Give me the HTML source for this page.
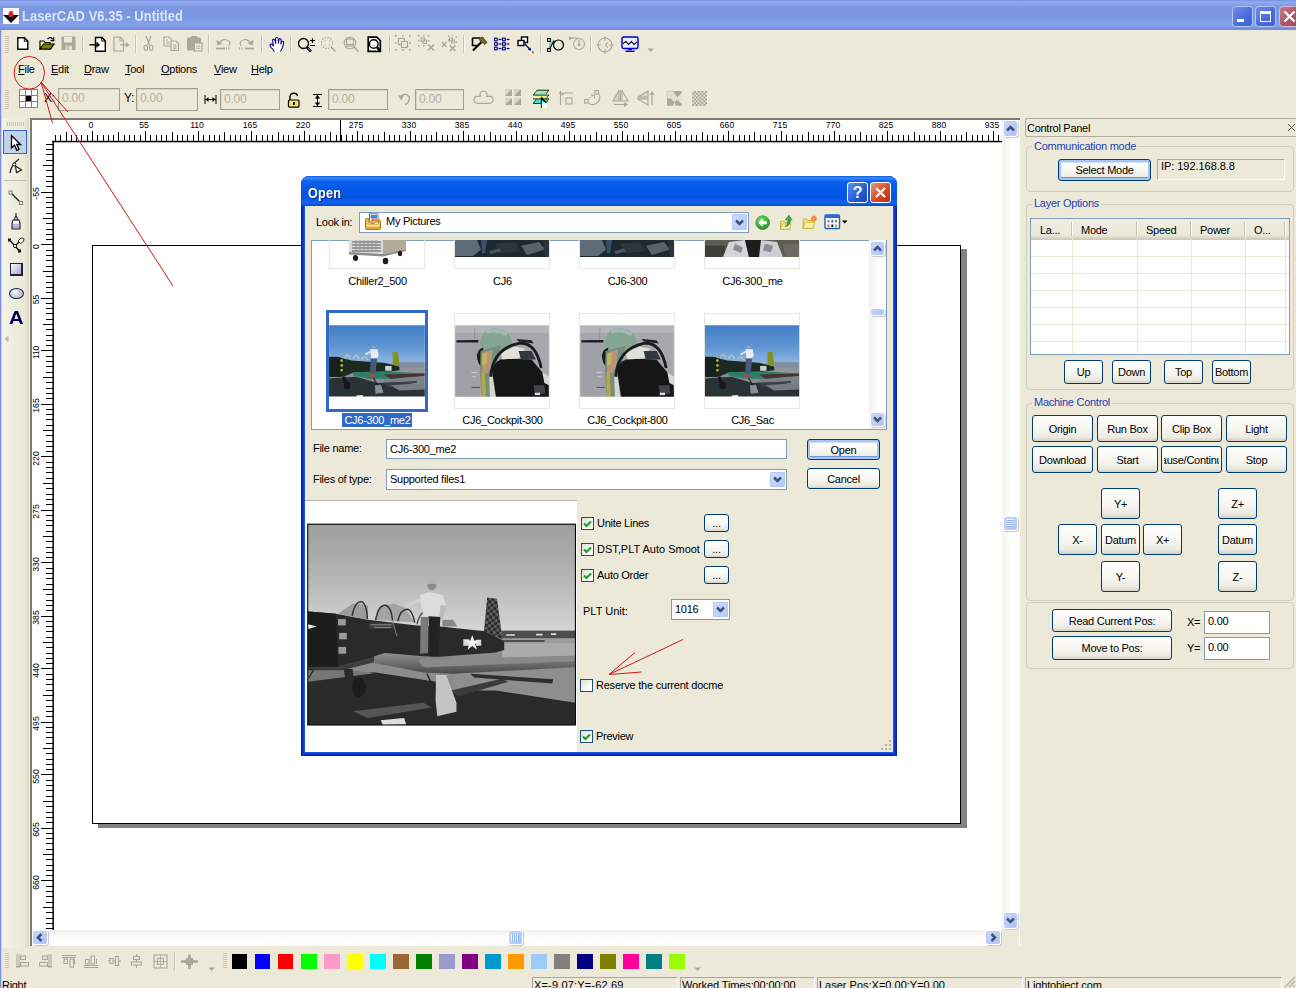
<!DOCTYPE html><html><head><meta charset="utf-8"><title>LaserCAD V6.35 - Untitled</title><style>
*{box-sizing:border-box;margin:0;padding:0}
html,body{width:1296px;height:988px;overflow:hidden;background:#ECE9D8}
body{font-family:"Liberation Sans",sans-serif;font-size:11px;letter-spacing:-0.27px;color:#000;position:relative}
.a{position:absolute}
.t{position:absolute;white-space:nowrap;line-height:13px}
u{text-decoration:underline}
.btn{position:absolute;border:1px solid #003C74;border-radius:3px;background:linear-gradient(#FFFFFF 0%,#F6F5EF 55%,#ECEBE2 85%,#D6D0C5 100%);text-align:center;white-space:nowrap;overflow:hidden;font-size:11px;line-height:1;display:flex;align-items:center;justify-content:center;padding-top:1.5px}
.btn.def{box-shadow:inset 0 0 0 2px #A9C4EF, inset 0 -3px 0 0 #6B95DC, inset 0 3px 0 0 #CEE0FA}
.grp{position:absolute;border:1px solid #D0D0BF;border-radius:4px}
.glabel{position:absolute;color:#1C44B4;font-size:11px;line-height:13px;background:#ECE9D8;padding:0 2px;white-space:nowrap}
.inp{position:absolute;border:1px solid #7F9DB9;background:#fff;font-size:11px;line-height:14px;padding:2px 0 0 3px;white-space:nowrap;overflow:hidden}
.dis{position:absolute;border:1px solid #A5ACB2;background:#ECE9D8;border-color:#9D9D92 #C9C7BA #C9C7BA #9D9D92;color:#ACA899;font-size:11px;padding:1px 0 0 3px;line-height:15px}
.sbtn{position:absolute;width:15px;height:15px;border:1px solid #fff;border-radius:3px;background:linear-gradient(135deg,#CBDAFC,#B5C8F6 70%,#A8BDF0);box-shadow:inset 0 0 0 1px #B9CBF7,1px 1px 1px rgba(120,130,160,.45)}
.sep{position:absolute;width:1px;background:#C8C5B5;box-shadow:1px 0 0 #F6F5EE}
.grip{position:absolute;width:3px;background:repeating-linear-gradient(#ECE9D8 0 1px,#C8C5B5 1px 2px);opacity:.8}
</style></head><body>
<div class="a" style="left:0;top:0;width:1296px;height:30px;background:linear-gradient(#7086DA 0,#8AA6EC 1px,#8DA9EE 3px,#7E9BE4 6px,#7B97E1 10px,#7B98E2 18px,#84A2EA 24px,#7F9CE6 27px,#7088DC 29px,#7A8FDC 30px)"></div>
<div class="a" style="left:0;top:30px;width:1px;height:958px;background:#7F90DE"></div><div class="a" style="left:1px;top:30px;width:1px;height:958px;background:#C9CFEA"></div>
<svg class="a" style="left:3px;top:8px" width="16" height="16" viewBox="0 0 16 16"><rect width="16" height="16" fill="#fff"/><path d="M0 7 L16 7 L8 15 Z" fill="#111"/><circle cx="8" cy="6.5" r="2.6" fill="#E02020"/><rect x="6.5" y="3" width="3" height="3" fill="#E02020"/></svg>
<div class="t" style="left:22px;top:8px;font:bold 14px/17px 'Liberation Sans',sans-serif;color:#D9E5FA;letter-spacing:.05px;transform:scaleX(.925);transform-origin:0 0">LaserCAD V6.35 - Untitled</div>
<div class="a" style="left:1232.3px;top:6px;width:20.5px;height:20.5px;border:1px solid #B4C6F8;border-radius:3.5px;background:linear-gradient(135deg,#6E8FEC,#4B6EDD 55%,#3F62D4)"><div class="a" style="left:3.5px;top:12px;width:7px;height:3px;background:#fff"></div></div>
<div class="a" style="left:1255.3px;top:6px;width:20.5px;height:20.5px;border:1px solid #B4C6F8;border-radius:3.5px;background:linear-gradient(135deg,#6E8FEC,#4B6EDD 55%,#3F62D4)"><div class="a" style="left:3.5px;top:4px;width:11px;height:11px;border:1px solid #fff;border-top-width:3px"></div></div>
<div class="a" style="left:1278.5px;top:6px;width:20.5px;height:20.5px;border:1px solid #D4B8D8;border-radius:3.5px;background:linear-gradient(135deg,#C87888,#B05868 55%,#A04C5C)"><svg class="a" style="left:3px;top:3px" width="13" height="13"><path d="M1.5 1.5 L11.5 11.5 M11.5 1.5 L1.5 11.5" stroke="#fff" stroke-width="2.3"/></svg></div>
<div class="t" style="left:18px;top:63px;font-size:11px"><u>F</u>ile</div><div class="t" style="left:51px;top:63px;font-size:11px"><u>E</u>dit</div><div class="t" style="left:84px;top:63px;font-size:11px"><u>D</u>raw</div><div class="t" style="left:125px;top:63px;font-size:11px"><u>T</u>ool</div><div class="t" style="left:161px;top:63px;font-size:11px"><u>O</u>ptions</div><div class="t" style="left:214px;top:63px;font-size:11px"><u>V</u>iew</div><div class="t" style="left:251px;top:63px;font-size:11px"><u>H</u>elp</div><div class="a" style="left:30px;top:118px;width:990px;height:828px;background:#fff;border-top:2px solid #7E7C70;border-left:2px solid #7E7C70"></div><svg class="a" style="left:0;top:0" width="1296" height="988" shape-rendering="crispEdges"><rect x="52.4" y="140.8" width="949.6" height="1.5" fill="#000" shape-rendering="geometricPrecision"/><rect x="340" y="120" width="1" height="22" fill="#000"/><rect x="52.4" y="140.8" width="1.5" height="789.2" fill="#000" shape-rendering="geometricPrecision"/><rect x="55" y="135" width="1" height="7" fill="#000"/><rect x="60" y="135" width="1" height="7" fill="#000"/><rect x="66" y="132" width="1" height="10" fill="#000"/><rect x="71" y="135" width="1" height="7" fill="#000"/><rect x="76" y="135" width="1" height="7" fill="#000"/><rect x="81" y="135" width="1" height="7" fill="#000"/><rect x="87" y="135" width="1" height="7" fill="#000"/><rect x="92" y="131" width="1" height="11" fill="#000"/><rect x="97" y="135" width="1" height="7" fill="#000"/><rect x="103" y="135" width="1" height="7" fill="#000"/><rect x="108" y="135" width="1" height="7" fill="#000"/><rect x="113" y="135" width="1" height="7" fill="#000"/><rect x="118" y="132" width="1" height="10" fill="#000"/><rect x="124" y="135" width="1" height="7" fill="#000"/><rect x="129" y="135" width="1" height="7" fill="#000"/><rect x="134" y="135" width="1" height="7" fill="#000"/><rect x="140" y="135" width="1" height="7" fill="#000"/><rect x="145" y="131" width="1" height="11" fill="#000"/><rect x="150" y="135" width="1" height="7" fill="#000"/><rect x="156" y="135" width="1" height="7" fill="#000"/><rect x="161" y="135" width="1" height="7" fill="#000"/><rect x="166" y="135" width="1" height="7" fill="#000"/><rect x="172" y="132" width="1" height="10" fill="#000"/><rect x="177" y="135" width="1" height="7" fill="#000"/><rect x="182" y="135" width="1" height="7" fill="#000"/><rect x="187" y="135" width="1" height="7" fill="#000"/><rect x="193" y="135" width="1" height="7" fill="#000"/><rect x="198" y="131" width="1" height="11" fill="#000"/><rect x="203" y="135" width="1" height="7" fill="#000"/><rect x="209" y="135" width="1" height="7" fill="#000"/><rect x="214" y="135" width="1" height="7" fill="#000"/><rect x="219" y="135" width="1" height="7" fill="#000"/><rect x="224" y="132" width="1" height="10" fill="#000"/><rect x="230" y="135" width="1" height="7" fill="#000"/><rect x="235" y="135" width="1" height="7" fill="#000"/><rect x="240" y="135" width="1" height="7" fill="#000"/><rect x="246" y="135" width="1" height="7" fill="#000"/><rect x="251" y="131" width="1" height="11" fill="#000"/><rect x="256" y="135" width="1" height="7" fill="#000"/><rect x="262" y="135" width="1" height="7" fill="#000"/><rect x="267" y="135" width="1" height="7" fill="#000"/><rect x="272" y="135" width="1" height="7" fill="#000"/><rect x="278" y="132" width="1" height="10" fill="#000"/><rect x="283" y="135" width="1" height="7" fill="#000"/><rect x="288" y="135" width="1" height="7" fill="#000"/><rect x="293" y="135" width="1" height="7" fill="#000"/><rect x="299" y="135" width="1" height="7" fill="#000"/><rect x="304" y="131" width="1" height="11" fill="#000"/><rect x="309" y="135" width="1" height="7" fill="#000"/><rect x="315" y="135" width="1" height="7" fill="#000"/><rect x="320" y="135" width="1" height="7" fill="#000"/><rect x="325" y="135" width="1" height="7" fill="#000"/><rect x="330" y="132" width="1" height="10" fill="#000"/><rect x="336" y="135" width="1" height="7" fill="#000"/><rect x="341" y="135" width="1" height="7" fill="#000"/><rect x="346" y="135" width="1" height="7" fill="#000"/><rect x="352" y="135" width="1" height="7" fill="#000"/><rect x="357" y="131" width="1" height="11" fill="#000"/><rect x="362" y="135" width="1" height="7" fill="#000"/><rect x="368" y="135" width="1" height="7" fill="#000"/><rect x="373" y="135" width="1" height="7" fill="#000"/><rect x="378" y="135" width="1" height="7" fill="#000"/><rect x="384" y="132" width="1" height="10" fill="#000"/><rect x="389" y="135" width="1" height="7" fill="#000"/><rect x="394" y="135" width="1" height="7" fill="#000"/><rect x="399" y="135" width="1" height="7" fill="#000"/><rect x="405" y="135" width="1" height="7" fill="#000"/><rect x="410" y="131" width="1" height="11" fill="#000"/><rect x="415" y="135" width="1" height="7" fill="#000"/><rect x="421" y="135" width="1" height="7" fill="#000"/><rect x="426" y="135" width="1" height="7" fill="#000"/><rect x="431" y="135" width="1" height="7" fill="#000"/><rect x="436" y="132" width="1" height="10" fill="#000"/><rect x="442" y="135" width="1" height="7" fill="#000"/><rect x="447" y="135" width="1" height="7" fill="#000"/><rect x="452" y="135" width="1" height="7" fill="#000"/><rect x="458" y="135" width="1" height="7" fill="#000"/><rect x="463" y="131" width="1" height="11" fill="#000"/><rect x="468" y="135" width="1" height="7" fill="#000"/><rect x="474" y="135" width="1" height="7" fill="#000"/><rect x="479" y="135" width="1" height="7" fill="#000"/><rect x="484" y="135" width="1" height="7" fill="#000"/><rect x="490" y="132" width="1" height="10" fill="#000"/><rect x="495" y="135" width="1" height="7" fill="#000"/><rect x="500" y="135" width="1" height="7" fill="#000"/><rect x="505" y="135" width="1" height="7" fill="#000"/><rect x="511" y="135" width="1" height="7" fill="#000"/><rect x="516" y="131" width="1" height="11" fill="#000"/><rect x="521" y="135" width="1" height="7" fill="#000"/><rect x="527" y="135" width="1" height="7" fill="#000"/><rect x="532" y="135" width="1" height="7" fill="#000"/><rect x="537" y="135" width="1" height="7" fill="#000"/><rect x="542" y="132" width="1" height="10" fill="#000"/><rect x="548" y="135" width="1" height="7" fill="#000"/><rect x="553" y="135" width="1" height="7" fill="#000"/><rect x="558" y="135" width="1" height="7" fill="#000"/><rect x="564" y="135" width="1" height="7" fill="#000"/><rect x="569" y="131" width="1" height="11" fill="#000"/><rect x="574" y="135" width="1" height="7" fill="#000"/><rect x="580" y="135" width="1" height="7" fill="#000"/><rect x="585" y="135" width="1" height="7" fill="#000"/><rect x="590" y="135" width="1" height="7" fill="#000"/><rect x="596" y="132" width="1" height="10" fill="#000"/><rect x="601" y="135" width="1" height="7" fill="#000"/><rect x="606" y="135" width="1" height="7" fill="#000"/><rect x="611" y="135" width="1" height="7" fill="#000"/><rect x="617" y="135" width="1" height="7" fill="#000"/><rect x="622" y="131" width="1" height="11" fill="#000"/><rect x="627" y="135" width="1" height="7" fill="#000"/><rect x="633" y="135" width="1" height="7" fill="#000"/><rect x="638" y="135" width="1" height="7" fill="#000"/><rect x="643" y="135" width="1" height="7" fill="#000"/><rect x="648" y="132" width="1" height="10" fill="#000"/><rect x="654" y="135" width="1" height="7" fill="#000"/><rect x="659" y="135" width="1" height="7" fill="#000"/><rect x="664" y="135" width="1" height="7" fill="#000"/><rect x="670" y="135" width="1" height="7" fill="#000"/><rect x="675" y="131" width="1" height="11" fill="#000"/><rect x="680" y="135" width="1" height="7" fill="#000"/><rect x="686" y="135" width="1" height="7" fill="#000"/><rect x="691" y="135" width="1" height="7" fill="#000"/><rect x="696" y="135" width="1" height="7" fill="#000"/><rect x="702" y="132" width="1" height="10" fill="#000"/><rect x="707" y="135" width="1" height="7" fill="#000"/><rect x="712" y="135" width="1" height="7" fill="#000"/><rect x="717" y="135" width="1" height="7" fill="#000"/><rect x="723" y="135" width="1" height="7" fill="#000"/><rect x="728" y="131" width="1" height="11" fill="#000"/><rect x="733" y="135" width="1" height="7" fill="#000"/><rect x="739" y="135" width="1" height="7" fill="#000"/><rect x="744" y="135" width="1" height="7" fill="#000"/><rect x="749" y="135" width="1" height="7" fill="#000"/><rect x="754" y="132" width="1" height="10" fill="#000"/><rect x="760" y="135" width="1" height="7" fill="#000"/><rect x="765" y="135" width="1" height="7" fill="#000"/><rect x="770" y="135" width="1" height="7" fill="#000"/><rect x="776" y="135" width="1" height="7" fill="#000"/><rect x="781" y="131" width="1" height="11" fill="#000"/><rect x="786" y="135" width="1" height="7" fill="#000"/><rect x="792" y="135" width="1" height="7" fill="#000"/><rect x="797" y="135" width="1" height="7" fill="#000"/><rect x="802" y="135" width="1" height="7" fill="#000"/><rect x="808" y="132" width="1" height="10" fill="#000"/><rect x="813" y="135" width="1" height="7" fill="#000"/><rect x="818" y="135" width="1" height="7" fill="#000"/><rect x="823" y="135" width="1" height="7" fill="#000"/><rect x="829" y="135" width="1" height="7" fill="#000"/><rect x="834" y="131" width="1" height="11" fill="#000"/><rect x="839" y="135" width="1" height="7" fill="#000"/><rect x="845" y="135" width="1" height="7" fill="#000"/><rect x="850" y="135" width="1" height="7" fill="#000"/><rect x="855" y="135" width="1" height="7" fill="#000"/><rect x="860" y="132" width="1" height="10" fill="#000"/><rect x="866" y="135" width="1" height="7" fill="#000"/><rect x="871" y="135" width="1" height="7" fill="#000"/><rect x="876" y="135" width="1" height="7" fill="#000"/><rect x="882" y="135" width="1" height="7" fill="#000"/><rect x="887" y="131" width="1" height="11" fill="#000"/><rect x="892" y="135" width="1" height="7" fill="#000"/><rect x="898" y="135" width="1" height="7" fill="#000"/><rect x="903" y="135" width="1" height="7" fill="#000"/><rect x="908" y="135" width="1" height="7" fill="#000"/><rect x="914" y="132" width="1" height="10" fill="#000"/><rect x="919" y="135" width="1" height="7" fill="#000"/><rect x="924" y="135" width="1" height="7" fill="#000"/><rect x="929" y="135" width="1" height="7" fill="#000"/><rect x="935" y="135" width="1" height="7" fill="#000"/><rect x="940" y="131" width="1" height="11" fill="#000"/><rect x="945" y="135" width="1" height="7" fill="#000"/><rect x="951" y="135" width="1" height="7" fill="#000"/><rect x="956" y="135" width="1" height="7" fill="#000"/><rect x="961" y="135" width="1" height="7" fill="#000"/><rect x="966" y="132" width="1" height="10" fill="#000"/><rect x="972" y="135" width="1" height="7" fill="#000"/><rect x="977" y="135" width="1" height="7" fill="#000"/><rect x="982" y="135" width="1" height="7" fill="#000"/><rect x="988" y="135" width="1" height="7" fill="#000"/><rect x="993" y="131" width="1" height="11" fill="#000"/><rect x="998" y="135" width="1" height="7" fill="#000"/><rect x="46" y="144" width="7" height="1" fill="#000"/><rect x="46" y="149" width="7" height="1" fill="#000"/><rect x="46" y="154" width="7" height="1" fill="#000"/><rect x="46" y="160" width="7" height="1" fill="#000"/><rect x="43" y="165" width="10" height="1" fill="#000"/><rect x="46" y="170" width="7" height="1" fill="#000"/><rect x="46" y="176" width="7" height="1" fill="#000"/><rect x="46" y="181" width="7" height="1" fill="#000"/><rect x="46" y="186" width="7" height="1" fill="#000"/><rect x="41" y="192" width="12" height="1" fill="#000"/><rect x="46" y="197" width="7" height="1" fill="#000"/><rect x="46" y="202" width="7" height="1" fill="#000"/><rect x="46" y="207" width="7" height="1" fill="#000"/><rect x="46" y="213" width="7" height="1" fill="#000"/><rect x="43" y="218" width="10" height="1" fill="#000"/><rect x="46" y="223" width="7" height="1" fill="#000"/><rect x="46" y="229" width="7" height="1" fill="#000"/><rect x="46" y="234" width="7" height="1" fill="#000"/><rect x="46" y="239" width="7" height="1" fill="#000"/><rect x="41" y="244" width="12" height="1" fill="#000"/><rect x="46" y="250" width="7" height="1" fill="#000"/><rect x="46" y="255" width="7" height="1" fill="#000"/><rect x="46" y="260" width="7" height="1" fill="#000"/><rect x="46" y="266" width="7" height="1" fill="#000"/><rect x="43" y="271" width="10" height="1" fill="#000"/><rect x="46" y="276" width="7" height="1" fill="#000"/><rect x="46" y="282" width="7" height="1" fill="#000"/><rect x="46" y="287" width="7" height="1" fill="#000"/><rect x="46" y="292" width="7" height="1" fill="#000"/><rect x="41" y="298" width="12" height="1" fill="#000"/><rect x="46" y="303" width="7" height="1" fill="#000"/><rect x="46" y="308" width="7" height="1" fill="#000"/><rect x="46" y="313" width="7" height="1" fill="#000"/><rect x="46" y="319" width="7" height="1" fill="#000"/><rect x="43" y="324" width="10" height="1" fill="#000"/><rect x="46" y="329" width="7" height="1" fill="#000"/><rect x="46" y="335" width="7" height="1" fill="#000"/><rect x="46" y="340" width="7" height="1" fill="#000"/><rect x="46" y="345" width="7" height="1" fill="#000"/><rect x="41" y="350" width="12" height="1" fill="#000"/><rect x="46" y="356" width="7" height="1" fill="#000"/><rect x="46" y="361" width="7" height="1" fill="#000"/><rect x="46" y="366" width="7" height="1" fill="#000"/><rect x="46" y="372" width="7" height="1" fill="#000"/><rect x="43" y="377" width="10" height="1" fill="#000"/><rect x="46" y="382" width="7" height="1" fill="#000"/><rect x="46" y="388" width="7" height="1" fill="#000"/><rect x="46" y="393" width="7" height="1" fill="#000"/><rect x="46" y="398" width="7" height="1" fill="#000"/><rect x="41" y="404" width="12" height="1" fill="#000"/><rect x="46" y="409" width="7" height="1" fill="#000"/><rect x="46" y="414" width="7" height="1" fill="#000"/><rect x="46" y="419" width="7" height="1" fill="#000"/><rect x="46" y="425" width="7" height="1" fill="#000"/><rect x="43" y="430" width="10" height="1" fill="#000"/><rect x="46" y="435" width="7" height="1" fill="#000"/><rect x="46" y="441" width="7" height="1" fill="#000"/><rect x="46" y="446" width="7" height="1" fill="#000"/><rect x="46" y="451" width="7" height="1" fill="#000"/><rect x="41" y="456" width="12" height="1" fill="#000"/><rect x="46" y="462" width="7" height="1" fill="#000"/><rect x="46" y="467" width="7" height="1" fill="#000"/><rect x="46" y="472" width="7" height="1" fill="#000"/><rect x="46" y="478" width="7" height="1" fill="#000"/><rect x="43" y="483" width="10" height="1" fill="#000"/><rect x="46" y="488" width="7" height="1" fill="#000"/><rect x="46" y="494" width="7" height="1" fill="#000"/><rect x="46" y="499" width="7" height="1" fill="#000"/><rect x="46" y="504" width="7" height="1" fill="#000"/><rect x="41" y="510" width="12" height="1" fill="#000"/><rect x="46" y="515" width="7" height="1" fill="#000"/><rect x="46" y="520" width="7" height="1" fill="#000"/><rect x="46" y="525" width="7" height="1" fill="#000"/><rect x="46" y="531" width="7" height="1" fill="#000"/><rect x="43" y="536" width="10" height="1" fill="#000"/><rect x="46" y="541" width="7" height="1" fill="#000"/><rect x="46" y="547" width="7" height="1" fill="#000"/><rect x="46" y="552" width="7" height="1" fill="#000"/><rect x="46" y="557" width="7" height="1" fill="#000"/><rect x="41" y="562" width="12" height="1" fill="#000"/><rect x="46" y="568" width="7" height="1" fill="#000"/><rect x="46" y="573" width="7" height="1" fill="#000"/><rect x="46" y="578" width="7" height="1" fill="#000"/><rect x="46" y="584" width="7" height="1" fill="#000"/><rect x="43" y="589" width="10" height="1" fill="#000"/><rect x="46" y="594" width="7" height="1" fill="#000"/><rect x="46" y="600" width="7" height="1" fill="#000"/><rect x="46" y="605" width="7" height="1" fill="#000"/><rect x="46" y="610" width="7" height="1" fill="#000"/><rect x="41" y="616" width="12" height="1" fill="#000"/><rect x="46" y="621" width="7" height="1" fill="#000"/><rect x="46" y="626" width="7" height="1" fill="#000"/><rect x="46" y="631" width="7" height="1" fill="#000"/><rect x="46" y="637" width="7" height="1" fill="#000"/><rect x="43" y="642" width="10" height="1" fill="#000"/><rect x="46" y="647" width="7" height="1" fill="#000"/><rect x="46" y="653" width="7" height="1" fill="#000"/><rect x="46" y="658" width="7" height="1" fill="#000"/><rect x="46" y="663" width="7" height="1" fill="#000"/><rect x="41" y="668" width="12" height="1" fill="#000"/><rect x="46" y="674" width="7" height="1" fill="#000"/><rect x="46" y="679" width="7" height="1" fill="#000"/><rect x="46" y="684" width="7" height="1" fill="#000"/><rect x="46" y="690" width="7" height="1" fill="#000"/><rect x="43" y="695" width="10" height="1" fill="#000"/><rect x="46" y="700" width="7" height="1" fill="#000"/><rect x="46" y="706" width="7" height="1" fill="#000"/><rect x="46" y="711" width="7" height="1" fill="#000"/><rect x="46" y="716" width="7" height="1" fill="#000"/><rect x="41" y="722" width="12" height="1" fill="#000"/><rect x="46" y="727" width="7" height="1" fill="#000"/><rect x="46" y="732" width="7" height="1" fill="#000"/><rect x="46" y="737" width="7" height="1" fill="#000"/><rect x="46" y="743" width="7" height="1" fill="#000"/><rect x="43" y="748" width="10" height="1" fill="#000"/><rect x="46" y="753" width="7" height="1" fill="#000"/><rect x="46" y="759" width="7" height="1" fill="#000"/><rect x="46" y="764" width="7" height="1" fill="#000"/><rect x="46" y="769" width="7" height="1" fill="#000"/><rect x="41" y="774" width="12" height="1" fill="#000"/><rect x="46" y="780" width="7" height="1" fill="#000"/><rect x="46" y="785" width="7" height="1" fill="#000"/><rect x="46" y="790" width="7" height="1" fill="#000"/><rect x="46" y="796" width="7" height="1" fill="#000"/><rect x="43" y="801" width="10" height="1" fill="#000"/><rect x="46" y="806" width="7" height="1" fill="#000"/><rect x="46" y="812" width="7" height="1" fill="#000"/><rect x="46" y="817" width="7" height="1" fill="#000"/><rect x="46" y="822" width="7" height="1" fill="#000"/><rect x="41" y="828" width="12" height="1" fill="#000"/><rect x="46" y="833" width="7" height="1" fill="#000"/><rect x="46" y="838" width="7" height="1" fill="#000"/><rect x="46" y="843" width="7" height="1" fill="#000"/><rect x="46" y="849" width="7" height="1" fill="#000"/><rect x="43" y="854" width="10" height="1" fill="#000"/><rect x="46" y="859" width="7" height="1" fill="#000"/><rect x="46" y="865" width="7" height="1" fill="#000"/><rect x="46" y="870" width="7" height="1" fill="#000"/><rect x="46" y="875" width="7" height="1" fill="#000"/><rect x="41" y="880" width="12" height="1" fill="#000"/><rect x="46" y="886" width="7" height="1" fill="#000"/><rect x="46" y="891" width="7" height="1" fill="#000"/><rect x="46" y="896" width="7" height="1" fill="#000"/><rect x="46" y="902" width="7" height="1" fill="#000"/><rect x="43" y="907" width="10" height="1" fill="#000"/><rect x="46" y="912" width="7" height="1" fill="#000"/><rect x="46" y="918" width="7" height="1" fill="#000"/><rect x="46" y="923" width="7" height="1" fill="#000"/><rect x="46" y="928" width="7" height="1" fill="#000"/></svg><div class="t" style="left:71px;top:119px;width:40px;text-align:center;font-size:8.6px;letter-spacing:0">0</div><div class="t" style="left:124px;top:119px;width:40px;text-align:center;font-size:8.6px;letter-spacing:0">55</div><div class="t" style="left:177px;top:119px;width:40px;text-align:center;font-size:8.6px;letter-spacing:0">110</div><div class="t" style="left:230px;top:119px;width:40px;text-align:center;font-size:8.6px;letter-spacing:0">165</div><div class="t" style="left:283px;top:119px;width:40px;text-align:center;font-size:8.6px;letter-spacing:0">220</div><div class="t" style="left:336px;top:119px;width:40px;text-align:center;font-size:8.6px;letter-spacing:0">275</div><div class="t" style="left:389px;top:119px;width:40px;text-align:center;font-size:8.6px;letter-spacing:0">330</div><div class="t" style="left:442px;top:119px;width:40px;text-align:center;font-size:8.6px;letter-spacing:0">385</div><div class="t" style="left:495px;top:119px;width:40px;text-align:center;font-size:8.6px;letter-spacing:0">440</div><div class="t" style="left:548px;top:119px;width:40px;text-align:center;font-size:8.6px;letter-spacing:0">495</div><div class="t" style="left:601px;top:119px;width:40px;text-align:center;font-size:8.6px;letter-spacing:0">550</div><div class="t" style="left:654px;top:119px;width:40px;text-align:center;font-size:8.6px;letter-spacing:0">605</div><div class="t" style="left:707px;top:119px;width:40px;text-align:center;font-size:8.6px;letter-spacing:0">660</div><div class="t" style="left:760px;top:119px;width:40px;text-align:center;font-size:8.6px;letter-spacing:0">715</div><div class="t" style="left:813px;top:119px;width:40px;text-align:center;font-size:8.6px;letter-spacing:0">770</div><div class="t" style="left:866px;top:119px;width:40px;text-align:center;font-size:8.6px;letter-spacing:0">825</div><div class="t" style="left:919px;top:119px;width:40px;text-align:center;font-size:8.6px;letter-spacing:0">880</div><div class="t" style="left:972px;top:119px;width:40px;text-align:center;font-size:8.6px;letter-spacing:0">935</div><div class="t" style="left:16px;top:187px;width:40px;height:13px;text-align:center;font-size:8.6px;letter-spacing:0;transform:rotate(-90deg)">-55</div><div class="t" style="left:16px;top:240px;width:40px;height:13px;text-align:center;font-size:8.6px;letter-spacing:0;transform:rotate(-90deg)">0</div><div class="t" style="left:16px;top:293px;width:40px;height:13px;text-align:center;font-size:8.6px;letter-spacing:0;transform:rotate(-90deg)">55</div><div class="t" style="left:16px;top:346px;width:40px;height:13px;text-align:center;font-size:8.6px;letter-spacing:0;transform:rotate(-90deg)">110</div><div class="t" style="left:16px;top:399px;width:40px;height:13px;text-align:center;font-size:8.6px;letter-spacing:0;transform:rotate(-90deg)">165</div><div class="t" style="left:16px;top:452px;width:40px;height:13px;text-align:center;font-size:8.6px;letter-spacing:0;transform:rotate(-90deg)">220</div><div class="t" style="left:16px;top:505px;width:40px;height:13px;text-align:center;font-size:8.6px;letter-spacing:0;transform:rotate(-90deg)">275</div><div class="t" style="left:16px;top:558px;width:40px;height:13px;text-align:center;font-size:8.6px;letter-spacing:0;transform:rotate(-90deg)">330</div><div class="t" style="left:16px;top:611px;width:40px;height:13px;text-align:center;font-size:8.6px;letter-spacing:0;transform:rotate(-90deg)">385</div><div class="t" style="left:16px;top:664px;width:40px;height:13px;text-align:center;font-size:8.6px;letter-spacing:0;transform:rotate(-90deg)">440</div><div class="t" style="left:16px;top:717px;width:40px;height:13px;text-align:center;font-size:8.6px;letter-spacing:0;transform:rotate(-90deg)">495</div><div class="t" style="left:16px;top:770px;width:40px;height:13px;text-align:center;font-size:8.6px;letter-spacing:0;transform:rotate(-90deg)">550</div><div class="t" style="left:16px;top:823px;width:40px;height:13px;text-align:center;font-size:8.6px;letter-spacing:0;transform:rotate(-90deg)">605</div><div class="t" style="left:16px;top:876px;width:40px;height:13px;text-align:center;font-size:8.6px;letter-spacing:0;transform:rotate(-90deg)">660</div><div class="a" style="left:98px;top:249px;width:869px;height:579px;background:#828282"></div><div class="a" style="left:92px;top:245px;width:869px;height:579px;background:#fff;border:1px solid #000"></div><div class="a" style="left:1002px;top:120px;width:17px;height:810px;background:linear-gradient(90deg,#F3F1EC,#FDFDFB 50%,#FEFEFB)"></div><div class="sbtn" style="left:1003px;top:120px;height:17px"></div><svg class="a" style="left:1006px;top:125px" width="9" height="7"><path d="M1 5.5 L4.5 2 L8 5.5" stroke="#3F5280" stroke-width="2.5" fill="none"/></svg><div class="sbtn" style="left:1003px;top:912px;height:17px"></div><svg class="a" style="left:1006px;top:917px" width="9" height="7"><path d="M1 1.5 L4.5 5 L8 1.5" stroke="#3F5280" stroke-width="2.5" fill="none"/></svg><div class="sbtn" style="left:1003px;top:516px"></div><div class="a" style="left:1007px;top:519px;width:7px;height:8px;background:repeating-linear-gradient(#EEF4FE 0 1px,#8CB0F8 1px 2px)"></div><div class="a" style="left:32px;top:930px;width:970px;height:16px;background:linear-gradient(#F3F1EC,#FDFDFB 50%,#FEFEFB)"></div><div class="sbtn" style="left:32px;top:930px;width:16px"></div><svg class="a" style="left:36px;top:933px" width="7" height="9"><path d="M5.5 1 L2 4.5 L5.5 8" stroke="#3F5280" stroke-width="2.5" fill="none"/></svg><div class="sbtn" style="left:985px;top:930px;width:16px"></div><svg class="a" style="left:990px;top:933px" width="7" height="9"><path d="M1.5 1 L5 4.5 L1.5 8" stroke="#3F5280" stroke-width="2.5" fill="none"/></svg><div class="sbtn" style="left:508px;top:930px"></div><div class="a" style="left:511px;top:934px;width:8px;height:7px;background:repeating-linear-gradient(90deg,#EEF4FE 0 1px,#8CB0F8 1px 2px)"></div><div class="a" style="left:1002px;top:930px;width:17px;height:16px;background:#ECE9D8"></div><div class="a" style="left:231.9px;top:954px;width:15.5px;height:14.5px;background:#000000"></div><div class="a" style="left:254.9px;top:954px;width:15.5px;height:14.5px;background:#0000FF"></div><div class="a" style="left:277.9px;top:954px;width:15.5px;height:14.5px;background:#FF0000"></div><div class="a" style="left:301.0px;top:954px;width:15.5px;height:14.5px;background:#00FF00"></div><div class="a" style="left:324.0px;top:954px;width:15.5px;height:14.5px;background:#FF99CC"></div><div class="a" style="left:347.0px;top:954px;width:15.5px;height:14.5px;background:#FFFF00"></div><div class="a" style="left:370.0px;top:954px;width:15.5px;height:14.5px;background:#00FFFF"></div><div class="a" style="left:393.0px;top:954px;width:15.5px;height:14.5px;background:#996633"></div><div class="a" style="left:416.1px;top:954px;width:15.5px;height:14.5px;background:#008000"></div><div class="a" style="left:439.1px;top:954px;width:15.5px;height:14.5px;background:#9999CC"></div><div class="a" style="left:462.1px;top:954px;width:15.5px;height:14.5px;background:#800080"></div><div class="a" style="left:485.1px;top:954px;width:15.5px;height:14.5px;background:#0099CC"></div><div class="a" style="left:508.1px;top:954px;width:15.5px;height:14.5px;background:#FF9900"></div><div class="a" style="left:531.2px;top:954px;width:15.5px;height:14.5px;background:#99CCFF"></div><div class="a" style="left:554.2px;top:954px;width:15.5px;height:14.5px;background:#808080"></div><div class="a" style="left:577.2px;top:954px;width:15.5px;height:14.5px;background:#000080"></div><div class="a" style="left:600.2px;top:954px;width:15.5px;height:14.5px;background:#808000"></div><div class="a" style="left:623.2px;top:954px;width:15.5px;height:14.5px;background:#FF0099"></div><div class="a" style="left:646.3px;top:954px;width:15.5px;height:14.5px;background:#008080"></div><div class="a" style="left:669.3px;top:954px;width:15.5px;height:14.5px;background:#99FF00"></div><div class="t" style="left:2px;top:979px;font-size:11px;letter-spacing:-.3px">Right</div><div class="a" style="left:532px;top:977px;width:146px;height:12px;border:1px solid #ACA899;border-right-color:#fff;border-bottom:0"></div><div class="t" style="left:534px;top:979px;font-size:11px;letter-spacing:0.17px">X=-9.07;Y=-62.69</div><div class="a" style="left:680px;top:977px;width:135px;height:12px;border:1px solid #ACA899;border-right-color:#fff;border-bottom:0"></div><div class="t" style="left:682px;top:979px;font-size:11px;letter-spacing:-0.12px">Worked Times:00:00:00</div><div class="a" style="left:817px;top:977px;width:206px;height:12px;border:1px solid #ACA899;border-right-color:#fff;border-bottom:0"></div><div class="t" style="left:819px;top:979px;font-size:11px;letter-spacing:0px">Laser Pos:X=0.00;Y=0.00</div><div class="a" style="left:1025px;top:977px;width:257px;height:12px;border:1px solid #ACA899;border-right-color:#fff;border-bottom:0"></div><div class="t" style="left:1027px;top:979px;font-size:11px;letter-spacing:-0.16px">Lightobject.com</div><svg class="a" style="left:1284px;top:976px" width="12" height="12"><path d="M11 1 L1 11 M11 5 L5 11 M11 9 L9 11" stroke="#B8B4A2" stroke-width="1.4"/></svg><div class="a" style="left:5px;top:35px;width:4px;height:18px;background:repeating-linear-gradient(#ECE9D8 0 1px,#C9C6B6 1px 2px)"></div><svg class="a" style="left:16px;top:36px" width="14" height="15" viewBox="0 0 14 15" ><path d="M1.8 1.8 H8.5 L11.8 5 V13.2 H1.8 Z" fill="#fff" stroke="#000" stroke-width="1.4"/><path d="M8.3 1.8 V5.2 H11.8" fill="none" stroke="#000" stroke-width="1"/></svg><svg class="a" style="left:38px;top:35px" width="18" height="16" viewBox="0 0 18 16" ><path d="M2 14 V6 H6 L7 7.5 H12 V9" fill="#FFFF99" stroke="#000" stroke-width="1.2"/><path d="M2 14.2 L5.5 9 H16 L12.5 14.2 Z" fill="#808000" stroke="#000" stroke-width="1.2"/><path d="M9.5 4 Q12.5 1 15 4.5" fill="none" stroke="#000" stroke-width="1.2"/><path d="M15.8 2.3 V5.6 H12.6" fill="none" stroke="#000" stroke-width="1.1"/></svg><svg class="a" style="left:61px;top:36px" width="15" height="15" viewBox="0 0 15 15" ><rect x="0.5" y="0.5" width="14" height="13.5" fill="#ACA899"/><rect x="3" y="1" width="8" height="5.5" fill="#ECE9D8"/><rect x="4" y="9.5" width="7" height="4.5" fill="#C8C5B5"/><rect x="8.5" y="10.2" width="2" height="3.5" fill="#ECE9D8"/></svg><div class="sep" style="left:82px;top:35px;height:18px"></div><svg class="a" style="left:89px;top:36px" width="18" height="17" viewBox="0 0 18 17" ><path d="M6.5 1.5 H13 L16.3 4.8 V15.3 H6.5 Z" fill="#fff" stroke="#000" stroke-width="1.4"/><path d="M12.8 1.5 V5 H16.3" fill="none" stroke="#000" stroke-width="1"/><path d="M0.5 8.8 H9" stroke="#000" stroke-width="1.4"/><path d="M7.5 5.6 L11 8.8 L7.5 12 Z" fill="#000"/></svg><svg class="a" style="left:113px;top:36px" width="18" height="17" viewBox="0 0 18 17" ><path d="M1 1 H7 L10.5 4.5 V15 H1 Z" fill="none" stroke="#ACA899" stroke-width="1.2"/><path d="M7 1 V4.8 H10.5" fill="none" stroke="#ACA899" stroke-width="1"/><path d="M7 8.8 H14" stroke="#ACA899" stroke-width="1.3"/><path d="M13 6 L16.5 8.8 L13 11.6 Z" fill="#ACA899"/></svg><div class="sep" style="left:135px;top:35px;height:18px"></div><svg class="a" style="left:143px;top:35px" width="11" height="17" viewBox="0 0 11 17" ><path d="M3 1 L6.5 10 M8 1 L4.5 10" stroke="#ACA899" stroke-width="1.2" fill="none"/><ellipse cx="2.8" cy="12.8" rx="1.8" ry="2.6" fill="none" stroke="#ACA899" stroke-width="1.1"/><ellipse cx="8.2" cy="12.8" rx="1.8" ry="2.6" fill="none" stroke="#ACA899" stroke-width="1.1"/></svg><svg class="a" style="left:163px;top:36px" width="17" height="16" viewBox="0 0 17 16" ><path d="M1 1 H6 L8.5 3.5 V10 H1 Z" fill="#F1EFE4" stroke="#ACA899" stroke-width="1.2"/><path d="M8 5 H13 L15.5 7.5 V14.5 H8 Z" fill="#F1EFE4" stroke="#ACA899" stroke-width="1.2"/><path d="M3 4 H5 M3 6 H6.5 M3 8 H6.5 M10 9 H13.5 M10 11 H13.5 M10 12.8 H13.5" stroke="#ACA899" stroke-width="1"/></svg><svg class="a" style="left:186px;top:35px" width="17" height="17" viewBox="0 0 17 17" ><rect x="1" y="2.5" width="14" height="13" rx="1.5" fill="#ACA899"/><rect x="5" y="1" width="6" height="3" fill="#ACA899"/><rect x="8.5" y="8" width="7.5" height="8" fill="#F1EFE4" stroke="#ACA899" stroke-width="1.1"/><path d="M10 11 H14.5 M10 13.2 H14.5" stroke="#ACA899" stroke-width="1"/></svg><div class="sep" style="left:208px;top:35px;height:18px"></div><svg class="a" style="left:215px;top:37px" width="17" height="13" viewBox="0 0 17 13" ><path d="M3 7.5 Q9 -1 14.5 5 Q15.5 7.5 13.5 9" fill="none" stroke="#ACA899" stroke-width="1.1"/><path d="M1.5 2.8 L2.2 8.6 L7.5 6.4 Z" fill="#ACA899"/><path d="M1 11.5 H10" stroke="#ACA899" stroke-width="1.8"/><path d="M11 11.5 H16" stroke="#ACA899" stroke-width="1.8" stroke-dasharray="1 1.4"/></svg><svg class="a" style="left:238px;top:37px" width="17" height="13" viewBox="0 0 17 13" ><path d="M14 7.5 Q8 -1 2.5 5 Q1.5 7.5 3.5 9" fill="none" stroke="#ACA899" stroke-width="1.1"/><path d="M15.5 2.8 L14.8 8.6 L9.5 6.4 Z" fill="#ACA899"/><path d="M7 11.5 H16" stroke="#ACA899" stroke-width="1.8"/><path d="M1 11.5 H6" stroke="#ACA899" stroke-width="1.8" stroke-dasharray="1 1.4"/></svg><div class="sep" style="left:261px;top:35px;height:18px"></div><svg class="a" style="left:268px;top:36px" width="18" height="17" viewBox="0 0 18 17" ><path d="M6.5 15.5 L3.2 11.5 Q1 8.5 2.8 8 Q4.2 7.8 5.5 10 L4.6 4.5 Q4.6 3 5.8 3.2 Q6.8 3.4 7.2 5.2 L7.6 7.5 L7.6 2.8 Q7.8 1.4 9 1.5 Q10.2 1.7 10.2 3 L10.4 7.3 L11 3.6 Q11.4 2.4 12.4 2.7 Q13.3 3 13.2 4.4 L12.9 8 L13.8 5.8 Q14.5 4.8 15.3 5.4 Q16 6 15.6 7.4 L14.5 11.5 L12.5 15.5" fill="#fff" stroke="#000080" stroke-width="1.05" stroke-linejoin="round"/></svg><div class="sep" style="left:290px;top:35px;height:18px"></div><svg class="a" style="left:297px;top:37px" width="19" height="16" viewBox="0 0 19 16" ><circle cx="6.5" cy="6.5" r="5" fill="none" stroke="#000" stroke-width="1.3"/><path d="M10 10.3 L14 14.5" stroke="#000" stroke-width="2.6"/><path d="M10.8 11 L13.8 14.2" stroke="#8080C0" stroke-width="1"/><path d="M13 3.5 H18 M15.5 1.2 V6 M13 8.5 H18" stroke="#000" stroke-width="1.2"/></svg><svg class="a" style="left:320px;top:36px" width="17" height="17" viewBox="0 0 17 17" ><circle cx="7" cy="7" r="5.6" fill="none" stroke="#ACA899" stroke-width="1.1" stroke-dasharray="1.6 1.3"/><path d="M11 11 L15.5 15.5" stroke="#ACA899" stroke-width="1.6"/><path d="M4.5 5 h1 M9 5 h1 M4.5 9 h1 M9 9 h1" stroke="#ACA899" stroke-width="1"/></svg><svg class="a" style="left:343px;top:36px" width="17" height="17" viewBox="0 0 17 17" ><circle cx="7" cy="7" r="5.8" fill="none" stroke="#ACA899" stroke-width="1.1"/><rect x="3.5" y="3" width="7" height="5.5" fill="none" stroke="#ACA899" stroke-width="1.3"/><path d="M3 10 H11" stroke="#ACA899" stroke-width="1.3"/><path d="M11 11 L15.5 15.5" stroke="#ACA899" stroke-width="1.6"/></svg><svg class="a" style="left:367px;top:36px" width="15" height="17" viewBox="0 0 15 17" ><path d="M1.2 1.2 H9.8 L13.3 4.7 V15.3 H1.2 Z" fill="#fff" stroke="#000" stroke-width="1.7"/><circle cx="6.8" cy="8" r="4.3" fill="#fff" stroke="#000" stroke-width="1.4"/><path d="M9.8 11 L13.3 15" stroke="#000" stroke-width="2.6"/><path d="M5.5 9.5 h2" stroke="#999" stroke-width="1"/></svg><div class="sep" style="left:389px;top:35px;height:18px"></div><svg class="a" style="left:395px;top:35px" width="16" height="16" viewBox="0 0 16 16" ><rect x="0" y="0" width="1.6" height="1.6" fill="#ACA899"/><rect x="7" y="0" width="1.6" height="1.6" fill="#ACA899"/><rect x="14" y="0" width="1.6" height="1.6" fill="#ACA899"/><rect x="0" y="7" width="1.6" height="1.6" fill="#ACA899"/><rect x="14" y="7" width="1.6" height="1.6" fill="#ACA899"/><rect x="0" y="14" width="1.6" height="1.6" fill="#ACA899"/><rect x="7" y="14" width="1.6" height="1.6" fill="#ACA899"/><rect x="14" y="14" width="1.6" height="1.6" fill="#ACA899"/><rect x="3.5" y="3.5" width="6" height="6" fill="none" stroke="#ACA899" stroke-width="1.1"/><rect x="6.5" y="6.5" width="6" height="6" fill="#ECE9D8" stroke="#ACA899" stroke-width="1.1"/></svg><svg class="a" style="left:418px;top:35px" width="17" height="17" viewBox="0 0 17 17" ><rect x="0" y="0" width="1.5" height="1.5" fill="#ACA899"/><rect x="5" y="0" width="1.5" height="1.5" fill="#ACA899"/><rect x="10" y="0" width="1.5" height="1.5" fill="#ACA899"/><rect x="0" y="5" width="1.5" height="1.5" fill="#ACA899"/><rect x="10" y="5" width="1.5" height="1.5" fill="#ACA899"/><rect x="0" y="10" width="1.5" height="1.5" fill="#ACA899"/><rect x="5" y="10" width="1.5" height="1.5" fill="#ACA899"/><rect x="3" y="3" width="3.5" height="3.5" fill="none" stroke="#ACA899" stroke-width="1"/><rect x="5" y="5" width="3.5" height="3.5" fill="none" stroke="#ACA899" stroke-width="1"/><path d="M10 9.5 L16 15.5 M16 9.5 L10 15.5" stroke="#ACA899" stroke-width="1.7"/></svg><svg class="a" style="left:441px;top:35px" width="17" height="17" viewBox="0 0 17 17" ><path d="M1 7 L5.5 12 M5.5 7 L1 12" stroke="#ACA899" stroke-width="1.3"/><path d="M9 10.5 L14.5 16 M14.5 10.5 L9 16" stroke="#ACA899" stroke-width="1.7"/><rect x="8.5" y="3" width="3" height="3" fill="none" stroke="#ACA899" stroke-width="1"/><rect x="10.5" y="5" width="3" height="3" fill="none" stroke="#ACA899" stroke-width="1"/><path d="M7 1 h1.4 M11 0 h1.4 M14.5 2 h1.4 M14.5 7 h1.4 M7 5 h1.4" stroke="#ACA899" stroke-width="1.3"/></svg><div class="sep" style="left:463px;top:35px;height:18px"></div><svg class="a" style="left:471px;top:36px" width="18" height="16" viewBox="0 0 18 16" ><path d="M1.5 2 H9 M1.5 2 V9.5 H6" fill="none" stroke="#000" stroke-width="1.6"/><path d="M2 14.5 L11 5.5" stroke="#000" stroke-width="2.2"/><path d="M8 2.5 L11.5 1 L16 6.5 L13.5 8.5 L12.5 6.5 L10.5 7.5 Z" fill="#6B6B2A" stroke="#333" stroke-width=".8"/></svg><svg class="a" style="left:494px;top:37px" width="16" height="14" viewBox="0 0 16 14" ><rect x="0.6" y="1.2" width="2.6" height="2.6" fill="#fff" stroke="#000080" stroke-width="1.1"/><path d="M4.5 2.5 H7.5" stroke="#000080" stroke-width="1.2"/><rect x="8.6" y="1.2" width="2.6" height="2.6" fill="#fff" stroke="#000080" stroke-width="1.1"/><path d="M12.5 2.5 H15.5" stroke="#000080" stroke-width="1.2"/><rect x="0.6" y="5.7" width="2.6" height="2.6" fill="#fff" stroke="#000080" stroke-width="1.1"/><path d="M4.5 7 H7.5" stroke="#000080" stroke-width="1.2"/><rect x="8.6" y="5.7" width="2.6" height="2.6" fill="#fff" stroke="#000080" stroke-width="1.1"/><path d="M12.5 7 H15.5" stroke="#000080" stroke-width="1.2"/><rect x="0.6" y="10.2" width="2.6" height="2.6" fill="#fff" stroke="#000080" stroke-width="1.1"/><path d="M4.5 11.5 H7.5" stroke="#000080" stroke-width="1.2"/><rect x="8.6" y="10.2" width="2.6" height="2.6" fill="#fff" stroke="#000080" stroke-width="1.1"/><path d="M12.5 11.5 H15.5" stroke="#000080" stroke-width="1.2"/></svg><svg class="a" style="left:517px;top:36px" width="18" height="18" viewBox="0 0 18 18" ><rect x="4.5" y="1" width="6" height="5.5" fill="#fff" stroke="#000" stroke-width="1.4"/><rect x="1" y="4.5" width="6" height="5" fill="#fff" stroke="#000" stroke-width="1.4"/><path d="M8 8 L13.5 14" stroke="#000080" stroke-width="1.2"/><path d="M14.3 14.8 L10.8 13.8 L13.3 11.3 Z" fill="#0000C0"/><rect x="15" y="15.3" width="2" height="2" fill="#E06000"/></svg><div class="sep" style="left:540px;top:35px;height:18px"></div><svg class="a" style="left:547px;top:38px" width="18" height="14" viewBox="0 0 18 14" ><path d="M2 2 L2 12 L6 4 Z" fill="#66E0D0"/><path d="M2 2 H7" stroke="#E8E870" stroke-width="1.5"/><path d="M2 12 L7 2.5" stroke="#000" stroke-width="1.1"/><circle cx="11.5" cy="7" r="5" fill="none" stroke="#000" stroke-width="1.2"/><rect x="0.6" y="0.6" width="2.8" height="2.8" fill="#fff" stroke="#000" stroke-width="1.1"/><rect x="0.6" y="10.6" width="2.8" height="2.8" fill="#fff" stroke="#000" stroke-width="1.1"/></svg><svg class="a" style="left:568px;top:36px" width="18" height="15" viewBox="0 0 18 15" ><circle cx="11" cy="8" r="5.5" fill="none" stroke="#ACA899" stroke-width="1.1"/><path d="M1 2 H10.5" stroke="#ACA899" stroke-width="1.2"/><path d="M0.5 0.5 L4.5 2 L1.5 4.5 Z" fill="#ACA899"/><path d="M11 3.5 V9" stroke="#ACA899" stroke-width="1.2"/><circle cx="11" cy="9" r="1.3" fill="#ACA899"/></svg><div class="sep" style="left:590px;top:35px;height:18px"></div><svg class="a" style="left:596px;top:36px" width="18" height="18" viewBox="0 0 18 18" ><circle cx="9" cy="9" r="7" fill="none" stroke="#ACA899" stroke-width="1.2"/><path d="M9 0.5 V5 M9 13 V17.5 M0.5 9 H5 M13 9 H17.5" stroke="#ACA899" stroke-width="1.2"/><path d="M12 6 L9.5 9 L12 12" fill="none" stroke="#ACA899" stroke-width="1.1"/></svg><svg class="a" style="left:621px;top:36px" width="18" height="17" viewBox="0 0 18 17" ><rect x="1" y="1" width="16" height="11.5" rx="1.5" fill="#E8EEFF" stroke="#0000C0" stroke-width="1.4"/><path d="M2 7.5 L5 5.5 L7.5 8.5 L10.5 5.5 L13 8.5 L16 6" fill="none" stroke="#000" stroke-width="1.1"/><path d="M7 12.5 H11 V14 H7 Z M4.5 14.5 H13.5 V16 H4.5 Z" fill="#0000E0"/></svg><svg class="a" style="left:647px;top:48px" width="8" height="5" viewBox="0 0 8 5" ><path d="M0.5 0.5 H7 L3.75 4 Z" fill="#ACA899"/></svg><div class="a" style="left:5px;top:89px;width:4px;height:20px;background:repeating-linear-gradient(#ECE9D8 0 1px,#C9C6B6 1px 2px)"></div><svg class="a" style="left:19px;top:89px" width="19" height="19" viewBox="0 0 19 19" shape-rendering="crispEdges"><rect x="0.5" y="0.5" width="18" height="18" fill="#fff" stroke="#808080"/><path d="M6.5 0 V19 M12.5 0 V19 M0 6.5 H19 M0 12.5 H19" stroke="#808080"/><rect x="7" y="7" width="5" height="5" fill="#000"/></svg><div class="t" style="left:44px;top:92px;font-size:12px">X:</div><div class="a" style="left:58px;top:88px;width:62px;height:23px;border:1px solid #A09E91;background:#ECE9D8;box-shadow:inset 1px 1px 0 #D8D5C6"></div><div class="t" style="left:62px;top:92px;font-size:12px;color:#B4B1A2;letter-spacing:-.2px">0.00</div><div class="t" style="left:124px;top:92px;font-size:12px">Y:</div><div class="a" style="left:136px;top:88px;width:62px;height:23px;border:1px solid #A09E91;background:#ECE9D8;box-shadow:inset 1px 1px 0 #D8D5C6"></div><div class="t" style="left:140px;top:92px;font-size:12px;color:#B4B1A2;letter-spacing:-.2px">0.00</div><svg class="a" style="left:204px;top:95px" width="13" height="9" viewBox="0 0 13 9" ><path d="M1 0 V9 M12 0 V9 M1 4.5 H12" stroke="#000" stroke-width="1"/><path d="M1.5 4.5 L4.5 2 V7 Z M11.5 4.5 L8.5 2 V7 Z" fill="#000"/></svg><div class="a" style="left:220px;top:89px;width:60px;height:21px;border:1px solid #A09E91;background:#ECE9D8;box-shadow:inset 1px 1px 0 #D8D5C6"></div><div class="t" style="left:224px;top:93px;font-size:12px;color:#B4B1A2;letter-spacing:-.2px">0.00</div><svg class="a" style="left:287px;top:92px" width="14" height="16" viewBox="0 0 14 16" ><path d="M3 9 V5 Q3 1.2 7 1.2 Q10 1.2 10.6 4" fill="none" stroke="#000" stroke-width="1.4"/><rect x="1.5" y="8" width="10.5" height="7.2" rx="1" fill="#F2E46A" stroke="#000" stroke-width="1.2"/><rect x="6" y="10" width="1.8" height="3" fill="#000"/></svg><svg class="a" style="left:313px;top:94px" width="9" height="13" viewBox="0 0 9 13" ><path d="M0 .5 H9 M0 12.5 H9 M4.5 1 V12" stroke="#000" stroke-width="1"/><path d="M4.5 1 L1.8 4.5 H7.2 Z M4.5 12 L1.8 8.5 H7.2 Z" fill="#000"/></svg><div class="a" style="left:328px;top:89px;width:60px;height:21px;border:1px solid #A09E91;background:#ECE9D8;box-shadow:inset 1px 1px 0 #D8D5C6"></div><div class="t" style="left:332px;top:93px;font-size:12px;color:#B4B1A2;letter-spacing:-.2px">0.00</div><svg class="a" style="left:397px;top:92px" width="14" height="14" viewBox="0 0 14 14" ><path d="M4 4.5 Q9 0 12 5 Q13.5 10 8 12.5" fill="none" stroke="#ACA899" stroke-width="1.5"/><path d="M1 3.5 L7 3 L4.5 8.5 Z" fill="#ACA899"/></svg><div class="a" style="left:415px;top:89px;width:49px;height:21px;border:1px solid #A09E91;background:#ECE9D8;box-shadow:inset 1px 1px 0 #D8D5C6"></div><div class="t" style="left:419px;top:93px;font-size:12px;color:#B4B1A2;letter-spacing:-.2px">0.00</div><svg class="a" style="left:473px;top:89px" width="21" height="16" viewBox="0 0 21 16" ><path d="M7.3 7.3 Q6 2.2 10.5 2.2 Q15 2.2 13.7 7.3 L16.8 7.3 Q20 7.3 20 10.8 Q20 14.3 16.8 14.3 L4.2 14.3 Q1 14.3 1 10.8 Q1 7.3 4.2 7.3 Z" fill="none" stroke="#ACA899" stroke-width="1.2"/></svg><svg class="a" style="left:505px;top:89px" width="16" height="16" viewBox="0 0 16 16" ><rect x="0" y="0" width="7" height="7" fill="#D9D6C8"/><path d="M0 7 h7 v-7 Z" fill="#ACA899"/><rect x="9" y="0" width="7" height="7" fill="#D9D6C8"/><path d="M9 7 h7 v-7 Z" fill="#ACA899"/><rect x="0" y="9" width="7" height="7" fill="#D9D6C8"/><path d="M0 16 h7 v-7 Z" fill="#ACA899"/><rect x="9" y="9" width="7" height="7" fill="#D9D6C8"/><path d="M9 16 h7 v-7 Z" fill="#ACA899"/></svg><svg class="a" style="left:525px;top:84px" width="80" height="30" viewBox="0 0 1296 486"><defs><pattern id="gd" width="16" height="16" patternUnits="userSpaceOnUse"><rect width="16" height="16" fill="#7FE39A"/><rect width="8" height="8" fill="#D8FFE0"/></pattern></defs><path d="M195 100 L385 100 L330 178 L135 178 Z" fill="url(#gd)"/><path d="M180 182 L385 182 L345 238 L140 238 Z" fill="#F2F088"/><path d="M185 244 L385 244 L340 312 L135 312 Z" fill="#3FE0D0"/><path d="M190 100 H388 M130 180 H388 M130 241 H388 M130 316 H262" stroke="#000" stroke-width="13"/><path d="M385 100 L338 166 M385 182 L340 236 M385 244 L345 300 M195 100 L135 178 M185 244 L135 312" stroke="#000" stroke-width="11"/><rect x="272" y="300" width="84" height="86" fill="#F4FFFF"/><path d="M265 388 V212" stroke="#000" stroke-width="15"/><path d="M258 196 L358 302 L330 302 L272 252 Z" fill="#000"/></svg><svg class="a" style="left:559px;top:91px" width="15" height="14" viewBox="0 0 15 14" ><path d="M1.5 0 V14 M0 2 H14" stroke="#ACA899" stroke-width="1.1"/><path d="M2 2 L5 3 L3 5 Z" fill="#ACA899"/><rect x="7" y="7" width="6" height="6" fill="none" stroke="#ACA899" stroke-width="1.1"/></svg><svg class="a" style="left:584px;top:90px" width="17" height="16" viewBox="0 0 17 16" ><rect x="0.6" y="9.5" width="3.5" height="3.5" fill="none" stroke="#ACA899" stroke-width="1.1"/><rect x="11" y="0.6" width="3.5" height="3.5" fill="none" stroke="#ACA899" stroke-width="1.1"/><path d="M4 9.5 L10.5 4" stroke="#ACA899" stroke-width="1" stroke-dasharray="1.5 1"/><path d="M15.5 4.5 Q17 12 10 14.5 Q6 15 4.5 13" fill="none" stroke="#ACA899" stroke-width="1.1"/><path d="M7 5 h3.5 v3.5" fill="none" stroke="#ACA899" stroke-width="1"/></svg><svg class="a" style="left:612px;top:90px" width="17" height="17" viewBox="0 0 17 17" ><path d="M7 0.5 V11 H1 Z" fill="#D9D6C8" stroke="#ACA899" stroke-width="1.1"/><path d="M10 0.5 V11 H16 Z" fill="none" stroke="#ACA899" stroke-width="1.1"/><path d="M8.5 0 V12" stroke="#ACA899" stroke-width="1"/><path d="M2 14.5 H13" stroke="#ACA899" stroke-width="1.2"/><path d="M12 12 L16 14.5 L12 17 Z" fill="#ACA899"/></svg><svg class="a" style="left:637px;top:90px" width="18" height="17" viewBox="0 0 18 17" ><path d="M11 1 V7 H1 Z" fill="#D9D6C8" stroke="#ACA899" stroke-width="1.1"/><path d="M11 15 V9 H1 Z" fill="none" stroke="#ACA899" stroke-width="1.1"/><path d="M0 8 H12" stroke="#ACA899" stroke-width="1"/><path d="M15 15 V4" stroke="#ACA899" stroke-width="1.2"/><path d="M12.5 5 L15 1 L17.5 5 Z" fill="#ACA899"/></svg><svg class="a" style="left:630px;top:84px" width="80" height="30" viewBox="0 0 1296 486"><rect x="600" y="115" width="240" height="236" fill="#E2DFD2"/><path d="M695 115 H840 V138 L768 214 Z M600 225 L668 238 L722 300 L690 351 H600 Z M760 255 L840 330 V351 H740 L722 300 Z" fill="#ACA899"/><path d="M600 115 H690 M600 115 V220" stroke="#C4C1B2" stroke-width="10"/></svg><div class="a" style="left:692px;top:91px;width:15px;height:15px;background:conic-gradient(#ACA899 25%,#DEDBCD 0 50%,#ACA899 0 75%,#DEDBCD 0) 0 0/3.75px 3.75px"></div><div class="a" style="left:2px;top:118px;width:27px;height:830px;background:linear-gradient(90deg,#F4F3EA,#ECE9D8 80%,#DDDAC8)"></div><div class="a" style="left:6px;top:122px;width:19px;height:4px;background:repeating-linear-gradient(90deg,#ECE9D8 0 1px,#C9C6B6 1px 2px)"></div><div class="a" style="left:3px;top:130px;width:24px;height:24px;background:#C1D2EE;border:1px solid #316AC5"></div><svg class="a" style="left:10px;top:134px" width="12" height="18" viewBox="0 0 12 18" ><path d="M1.5 1.5 V14 L4.5 11.2 L6.8 16.5 L9 15.5 L6.8 10.5 H10.5 Z" fill="#fff" stroke="#000" stroke-width="1.3" stroke-linejoin="miter"/></svg><svg class="a" style="left:8px;top:158px" width="16" height="17" viewBox="0 0 16 17" ><path d="M2 15 Q3 7 11 1" fill="none" stroke="#222" stroke-width="1.3"/><circle cx="6.2" cy="6.5" r="1.6" fill="#fff" stroke="#222" stroke-width="1"/><path d="M7.5 8 L13.5 12 L8.5 14.5 Z" fill="#fff" stroke="#222" stroke-width="1.2"/></svg><div class="a" style="left:4px;top:180px;width:22px;height:1px;background:#C5C2B2"></div><svg class="a" style="left:8px;top:190px" width="16" height="16" viewBox="0 0 16 16" ><path d="M3 3 L12.5 12.5" stroke="#222" stroke-width="1.4"/><rect x="1" y="1" width="3" height="3" fill="#fff" stroke="#708070" stroke-width="1"/><rect x="11.5" y="11.5" width="3" height="3" fill="#fff" stroke="#708070" stroke-width="1"/></svg><svg class="a" style="left:11px;top:213px" width="10" height="17" viewBox="0 0 10 17" ><path d="M5 0 V4 M3 7 L5 2.5 L7 7" fill="none" stroke="#222" stroke-width="1.1"/><path d="M2 7 H8 L9 10 V16 H1 V10 Z" fill="#B8B4DC" stroke="#222" stroke-width="1.1"/><rect x="2" y="8" width="6" height="3" fill="#F4F2FF"/></svg><svg class="a" style="left:7px;top:237px" width="18" height="17" viewBox="0 0 18 17" ><path d="M2.5 3 L8 9 L12.5 14 M8 9 L14 3" stroke="#111" stroke-width="1.3" fill="none"/><rect x="1" y="1.5" width="3" height="3" fill="#111"/><rect x="11" y="12.5" width="3" height="3" fill="#111"/><circle cx="8" cy="9" r="1.6" fill="#fff" stroke="#111" stroke-width="1"/><path d="M11 4 L14 1 L17 1.5 L16.5 4.5 L13.5 6.5 Z" fill="#fff" stroke="#333" stroke-width="1"/></svg><div class="a" style="left:10px;top:263px;width:13px;height:13px;border:1px solid #22223A;border-width:1px 2px 2px 1px;background:linear-gradient(135deg,#FFFFFF,#C9C6E2 60%,#A9A6CC)"></div><div class="a" style="left:9px;top:288px;width:15px;height:11px;border:1px solid #22223A;border-radius:50%;background:radial-gradient(circle at 40% 35%,#F2F1FA,#A9A6CC)"></div><div class="t" style="left:8.5px;top:308px;font:bold 18px/20px 'Liberation Sans',sans-serif;color:#00005A;transform:scaleX(1.12);transform-origin:left;letter-spacing:0">A</div><svg class="a" style="left:4px;top:335px" width="5" height="8" viewBox="0 0 5 8" ><path d="M4.5 0.5 V7.5 L0.5 4 Z" fill="#C0BDAE"/></svg><div class="a" style="left:5px;top:952px;width:4px;height:17px;background:repeating-linear-gradient(#ECE9D8 0 1px,#C9C6B6 1px 2px)"></div><div class="a" style="left:223px;top:952px;width:4px;height:17px;background:repeating-linear-gradient(#ECE9D8 0 1px,#C9C6B6 1px 2px)"></div><svg class="a" style="left:16px;top:954px" width="13" height="14" viewBox="0 0 13 14" ><path d="M1 0 V14 M3 0 V14" stroke="#ACA899" stroke-width="1"/><rect x="4.5" y="2" width="5" height="3.5" fill="none" stroke="#ACA899" stroke-width="1.1"/><rect x="4.5" y="8.5" width="8" height="3.5" fill="none" stroke="#ACA899" stroke-width="1.1"/><path d="M0 12.5 h5" stroke="#ACA899" stroke-width="1"/></svg><svg class="a" style="left:39px;top:954px" width="13" height="14" viewBox="0 0 13 14" ><path d="M10 0 V14 M12 0 V14" stroke="#ACA899" stroke-width="1"/><rect x="3.5" y="2" width="5" height="3.5" fill="none" stroke="#ACA899" stroke-width="1.1"/><rect x="0.5" y="8.5" width="8" height="3.5" fill="none" stroke="#ACA899" stroke-width="1.1"/><path d="M8 12.5 h5" stroke="#ACA899" stroke-width="1"/></svg><svg class="a" style="left:62px;top:955px" width="14" height="13" viewBox="0 0 14 13" ><path d="M0 .5 H14 M0 2.5 H14" stroke="#ACA899" stroke-width="1"/><rect x="2" y="4" width="3.5" height="4.5" fill="none" stroke="#ACA899" stroke-width="1.1"/><rect x="8" y="4" width="3.5" height="8" fill="none" stroke="#ACA899" stroke-width="1.1"/><path d="M12.5 4 v5" stroke="#ACA899" stroke-width="1"/></svg><svg class="a" style="left:84px;top:954px" width="14" height="14" viewBox="0 0 14 14" ><path d="M0 11.5 H14 M0 13.5 H14" stroke="#ACA899" stroke-width="1"/><rect x="1.5" y="5.5" width="3.5" height="4.5" fill="none" stroke="#ACA899" stroke-width="1.1"/><rect x="7" y="2" width="3.5" height="8" fill="none" stroke="#ACA899" stroke-width="1.1"/><path d="M12.5 5 v5" stroke="#ACA899" stroke-width="1"/></svg><svg class="a" style="left:108px;top:955px" width="13" height="12" viewBox="0 0 13 12" ><path d="M0 6 H13" stroke="#ACA899" stroke-width="1.1"/><rect x="2" y="3.5" width="3" height="5" fill="#ECE9D8" stroke="#ACA899" stroke-width="1.1"/><rect x="7.5" y="1.5" width="3" height="9" fill="#ECE9D8" stroke="#ACA899" stroke-width="1.1"/></svg><svg class="a" style="left:130px;top:954px" width="13" height="14" viewBox="0 0 13 14" ><path d="M6.5 0 V14" stroke="#ACA899" stroke-width="1.1"/><rect x="3.5" y="2.5" width="6" height="3" fill="#ECE9D8" stroke="#ACA899" stroke-width="1.1"/><rect x="1.5" y="8" width="10" height="3" fill="#ECE9D8" stroke="#ACA899" stroke-width="1.1"/></svg><svg class="a" style="left:153px;top:954px" width="15" height="15" viewBox="0 0 15 15" ><rect x="1" y="1" width="13" height="13" fill="none" stroke="#ACA899" stroke-width="1.1"/><rect x="4.5" y="4.5" width="6" height="6" fill="none" stroke="#ACA899" stroke-width=".9"/><path d="M7.5 1 V14 M1 7.5 H14" stroke="#ACA899" stroke-width=".8"/></svg><div class="sep" style="left:174px;top:952px;height:18px"></div><svg class="a" style="left:181px;top:954px" width="17" height="16" viewBox="0 0 17 16" ><path d="M0 7.5 H17 M8.5 0.5 V15" stroke="#ACA899" stroke-width="2.4"/><rect x="5" y="4" width="7" height="7" fill="#ACA899"/><path d="M3 6 h11 v3 h-11 Z M7 2 h3 v11 h-3Z" fill="#ACA899"/></svg><svg class="a" style="left:208px;top:967px" width="8" height="5" viewBox="0 0 8 5" ><path d="M0.5 0.5 H7 L3.75 4 Z" fill="#ACA899"/></svg><svg class="a" style="left:694px;top:967px" width="8" height="5" viewBox="0 0 8 5" ><path d="M0.5 0.5 H7 L3.75 4 Z" fill="#ACA899"/></svg><div class="a" style="left:1025px;top:118px;width:272px;height:19px;border:1px solid #B0AE9F;border-radius:2px;border-right:0"></div><div class="t" style="left:1027px;top:122px;font-size:11px">Control Panel</div><svg class="a" style="left:1287px;top:123px" width="9" height="9"><path d="M1 1 L8 8 M8 1 L1 8" stroke="#555" stroke-width="1"/></svg><div class="grp" style="left:1026px;top:146px;width:268px;height:46px"></div><div class="glabel" style="left:1032px;top:140px">Communication mode</div><div class="btn def" style="left:1058px;top:159px;width:93px;height:22px;font-size:11px;">Select Mode</div><div class="a" style="left:1157px;top:159px;width:128px;height:21px;border:1px solid;border-color:#ACA899 #fff #fff #ACA899"></div><div class="t" style="left:1161px;top:160px;font-size:11px;letter-spacing:-.05px">IP: 192.168.8.8</div><div class="grp" style="left:1026px;top:204px;width:268px;height:186px"></div><div class="glabel" style="left:1032px;top:197px">Layer Options</div><div class="a" style="left:1030px;top:218px;width:260px;height:137px;background:#fff;border:1px solid #7F9DB9"></div><div class="a" style="left:1031px;top:219px;width:258px;height:21px;background:linear-gradient(#EFEDE0 0,#EBEADB 16px,#DEDCCB 18px,#CBC7B8 21px)"></div><div class="t" style="left:1040px;top:224px;font-size:11px">La...</div><div class="a" style="left:1071px;top:222px;width:1px;height:14px;background:#C5C2B2;box-shadow:1px 0 0 #fff"></div><div class="t" style="left:1081px;top:224px;font-size:11px">Mode</div><div class="a" style="left:1136px;top:222px;width:1px;height:14px;background:#C5C2B2;box-shadow:1px 0 0 #fff"></div><div class="t" style="left:1146px;top:224px;font-size:11px">Speed</div><div class="a" style="left:1190px;top:222px;width:1px;height:14px;background:#C5C2B2;box-shadow:1px 0 0 #fff"></div><div class="t" style="left:1200px;top:224px;font-size:11px">Power</div><div class="a" style="left:1244px;top:222px;width:1px;height:14px;background:#C5C2B2;box-shadow:1px 0 0 #fff"></div><div class="t" style="left:1254px;top:224px;font-size:11px">O...</div><div class="a" style="left:1284px;top:222px;width:1px;height:14px;background:#C5C2B2;box-shadow:1px 0 0 #fff"></div><div class="a" style="left:1031px;top:256px;width:258px;height:1px;background:#ECE9D8"></div><div class="a" style="left:1031px;top:273px;width:258px;height:1px;background:#ECE9D8"></div><div class="a" style="left:1031px;top:290px;width:258px;height:1px;background:#ECE9D8"></div><div class="a" style="left:1031px;top:307px;width:258px;height:1px;background:#ECE9D8"></div><div class="a" style="left:1031px;top:324px;width:258px;height:1px;background:#ECE9D8"></div><div class="a" style="left:1031px;top:341px;width:258px;height:1px;background:#ECE9D8"></div><div class="a" style="left:1072px;top:239px;width:1px;height:115px;background:#ECE9D8"></div><div class="a" style="left:1137px;top:239px;width:1px;height:115px;background:#ECE9D8"></div><div class="a" style="left:1191px;top:239px;width:1px;height:115px;background:#ECE9D8"></div><div class="a" style="left:1245px;top:239px;width:1px;height:115px;background:#ECE9D8"></div><div class="a" style="left:1285px;top:239px;width:1px;height:115px;background:#ECE9D8"></div><div class="btn " style="left:1064px;top:360px;width:39px;height:24px;font-size:11px;">Up</div><div class="btn " style="left:1112px;top:360px;width:39px;height:24px;font-size:11px;">Down</div><div class="btn " style="left:1164px;top:360px;width:39px;height:24px;font-size:11px;">Top</div><div class="btn " style="left:1212px;top:360px;width:39px;height:24px;font-size:11px;">Bottom</div><div class="grp" style="left:1026px;top:403px;width:268px;height:198px"></div><div class="glabel" style="left:1032px;top:396px">Machine Control</div><div class="btn " style="left:1032px;top:415px;width:61px;height:27px;font-size:11px;">Origin</div><div class="btn " style="left:1097px;top:415px;width:61px;height:27px;font-size:11px;">Run Box</div><div class="btn " style="left:1161px;top:415px;width:61px;height:27px;font-size:11px;">Clip Box</div><div class="btn " style="left:1226px;top:415px;width:61px;height:27px;font-size:11px;">Light</div><div class="btn " style="left:1032px;top:446px;width:61px;height:27px;font-size:11px;">Download</div><div class="btn " style="left:1097px;top:446px;width:61px;height:27px;font-size:11px;">Start</div><div class="btn " style="left:1161px;top:446px;width:61px;height:27px;font-size:11px;"><span style="display:flex;justify-content:center;width:55px;overflow:hidden"><span style="margin-left:-1px">Pause/Continue</span></span></div><div class="btn " style="left:1226px;top:446px;width:61px;height:27px;font-size:11px;">Stop</div><div class="btn " style="left:1101px;top:488px;width:39px;height:31px;font-size:11px;">Y+</div><div class="btn " style="left:1058px;top:524px;width:39px;height:31px;font-size:11px;">X-</div><div class="btn " style="left:1101px;top:524px;width:39px;height:31px;font-size:11px;">Datum</div><div class="btn " style="left:1143px;top:524px;width:39px;height:31px;font-size:11px;">X+</div><div class="btn " style="left:1101px;top:561px;width:39px;height:31px;font-size:11px;">Y-</div><div class="btn " style="left:1218px;top:488px;width:39px;height:31px;font-size:11px;">Z+</div><div class="btn " style="left:1218px;top:524px;width:39px;height:31px;font-size:11px;">Datum</div><div class="btn " style="left:1218px;top:561px;width:39px;height:31px;font-size:11px;">Z-</div><div class="grp" style="left:1026px;top:602px;width:268px;height:67px"></div><div class="btn " style="left:1052px;top:609px;width:120px;height:23px;font-size:11px;">Read Current Pos:</div><div class="btn " style="left:1052px;top:636px;width:120px;height:24px;font-size:11px;">Move to Pos:</div><div class="t" style="left:1187px;top:616px;font-size:11px">X=</div><div class="t" style="left:1187px;top:642px;font-size:11px">Y=</div><div class="inp" style="left:1204px;top:611px;width:66px;height:23px">0.00</div><div class="inp" style="left:1204px;top:637px;width:66px;height:23px">0.00</div><div class="a" style="left:301px;top:176px;width:596px;height:580px;background:linear-gradient(90deg,#001AB8 0,#0A34CC 2px,#1858E4 3.5px,#0A44D4 5px,#0A44D4 591px,#1858E4 592.5px,#0A34CC 594px,#001AB8 596px);border-radius:8px 8px 0 0"></div><div class="a" style="left:304px;top:751px;width:590px;height:5px;background:linear-gradient(#0A44D4 0,#1858E4 1.5px,#0A34CC 3px,#001AB8 5px)"></div><div class="a" style="left:301px;top:176px;width:596px;height:30px;border-radius:8px 8px 0 0;background:linear-gradient(#0A58DC 0,#3C8CFB 2px,#0C62EE 5px,#0658EA 12px,#0454E4 22px,#1464F0 27px,#0848D0 30px)"></div><div class="a" style="left:305px;top:206px;width:588px;height:546px;background:#ECE9D8"></div><div class="t" style="left:308px;top:185px;font:bold 14px/17px 'Liberation Sans',sans-serif;color:#fff;letter-spacing:.3px;text-shadow:1px 1px 0 #0A2A80;transform:scaleX(.9);transform-origin:0 0">Open</div><div class="a" style="left:847px;top:182px;width:21px;height:21px;border:1px solid #fff;border-radius:3px;background:linear-gradient(135deg,#5C95F4,#2259D6 60%,#1A49C0)"></div><div class="t" style="left:847px;top:184px;width:21px;text-align:center;font:bold 16px/17px 'Liberation Sans',sans-serif;color:#fff">?</div><div class="a" style="left:870px;top:182px;width:21px;height:21px;border:1px solid #fff;border-radius:3px;background:linear-gradient(135deg,#EB9678,#D5492A 55%,#B8300F)"><svg class="a" style="left:3px;top:3px" width="13" height="13"><path d="M2 2 L11 11 M11 2 L2 11" stroke="#fff" stroke-width="2.3"/></svg></div><div class="t" style="left:316px;top:216px;font-size:11px">Look in:</div><div class="inp" style="left:359px;top:212px;width:390px;height:21px"></div><div class="t" style="left:386px;top:215px;font-size:11px">My Pictures</div><div class="a" style="left:731px;top:213px;width:17px;height:18px;border:1px solid #fff;border-radius:2px;background:linear-gradient(135deg,#CFDDFD,#B4C8F8);box-shadow:inset 0 0 0 1px #B4C8F6"></div><svg class="a" style="left:735px;top:219px" width="9" height="7"><path d="M1 1.5 L4.5 5 L8 1.5" stroke="#3F5280" stroke-width="2.5" fill="none"/></svg><svg class="a" style="left:364px;top:213px" width="18" height="18" viewBox="0 0 18 18"><rect x="5.5" y="0.8" width="8.5" height="9" fill="#fff" stroke="#5A80B0" stroke-width="1"/><rect x="6.5" y="2" width="6.5" height="3.5" fill="#3C8CE0"/><path d="M6.5 8 L9 4.5 L11 6.5 L13 5 V8 Z" fill="#E08030"/><path d="M1.5 7 Q1.5 5.5 3 5.5 H5 V9 H14.5 V6.5 Q16.5 6.5 16.5 8.5 V15 Q16.5 16.5 15 16.5 H3 Q1.5 16.5 1.5 15 Z" fill="#EFC04C" stroke="#B07818" stroke-width="1"/><rect x="5" y="9.2" width="9" height="2.2" fill="#F8F4E0" stroke="#B08830" stroke-width=".6"/><rect x="6.5" y="9.8" width="4" height="1" fill="#4A80D0"/><path d="M2.5 12.5 H15.5" stroke="#FBE8A0" stroke-width="1.6"/><path d="M2.5 15 H15.5" stroke="#D09828" stroke-width="1.2"/></svg><svg class="a" style="left:755px;top:214.6px" width="15.4" height="15.4" viewBox="0 0 17 17"><defs><radialGradient id="bk" cx=".4" cy=".3" r=".8"><stop offset="0" stop-color="#7BE07B"/><stop offset=".6" stop-color="#35B035"/><stop offset="1" stop-color="#1F8A1F"/></radialGradient></defs><circle cx="8.5" cy="8.5" r="7.6" fill="url(#bk)" stroke="#2A8A2A" stroke-width=".8"/><path d="M3.5 8.5 L8.5 4 V6.8 H13 V10.2 H8.5 V13 Z" fill="#fff"/></svg><svg class="a" style="left:778.5px;top:213.5px" width="14.4" height="16.2" viewBox="0 0 16 18"><path d="M1.5 17 L2 8 H6 L7 9.5 H12 V17 Z" fill="#F5E27A" stroke="#C8A838" stroke-width="1"/><path d="M1.5 17 L4 11 H13.5 L12 17 Z" fill="#FBEFA0" stroke="#C8A838" stroke-width=".8"/><path d="M7 14 Q10.5 12 10 6.5 H7.5 L11 1.5 L14.5 6.5 H12.5 Q13 13 7 14 Z" fill="#3CB043" stroke="#1F7A28" stroke-width=".8"/></svg><svg class="a" style="left:801.5px;top:215px" width="15.6" height="14.7" viewBox="0 0 17 16"><path d="M1 14.5 L1.5 4.5 H5.5 L6.5 6 H12 V14.5 Z" fill="#F5E27A" stroke="#C8A838" stroke-width="1"/><path d="M1 14.5 L3.5 8 H14 L12 14.5 Z" fill="#FBEFA0" stroke="#C8A838" stroke-width=".8"/><circle cx="13" cy="4" r="2.8" fill="#F07020"/><path d="M13 0 V8 M9 4 H17 M10.2 1.2 L15.8 6.8 M15.8 1.2 L10.2 6.8" stroke="#F8A050" stroke-width=".9"/></svg><svg class="a" style="left:824px;top:214px" width="24" height="16" viewBox="0 0 24 16"><rect x="1" y="1" width="14.5" height="13.5" rx="1" fill="#fff" stroke="#1E5FC0" stroke-width="1.4"/><rect x="1" y="1" width="14.5" height="3" fill="#2A6ED0"/><g><rect x="3.5" y="6" width="2" height="2.5" fill="#7080D0"/><rect x="7.3" y="6" width="2" height="2.5" fill="#4060C0"/><rect x="11" y="6" width="2" height="2.5" fill="#50A050"/><rect x="3.5" y="10.5" width="2" height="2.5" fill="#E06040"/><rect x="7.3" y="10.5" width="2" height="2.5" fill="#102060"/><rect x="11" y="10.5" width="2" height="2.5" fill="#A0B040"/></g><path d="M18 6.5 H23.5 L20.75 9.5 Z" fill="#000"/></svg><div class="a" style="left:311px;top:239.5px;width:576px;height:190.5px;background:#fff;border:1px solid #7F9DB9"></div><div class="a" style="left:329px;top:240px;width:96px;height:29px;border:1px solid #E9E7DF;border-top:0"></div><div class="a" style="left:454px;top:240px;width:96px;height:29px;border:1px solid #E9E7DF;border-top:0"></div><div class="a" style="left:579px;top:240px;width:96px;height:29px;border:1px solid #E9E7DF;border-top:0"></div><div class="a" style="left:704px;top:240px;width:96px;height:29px;border:1px solid #E9E7DF;border-top:0"></div><div class="t" style="left:329px;top:275px;width:97px;text-align:center;font-size:11px">Chiller2_500</div><div class="t" style="left:454px;top:275px;width:97px;text-align:center;font-size:11px">CJ6</div><div class="t" style="left:579px;top:275px;width:97px;text-align:center;font-size:11px">CJ6-300</div><div class="t" style="left:704px;top:275px;width:97px;text-align:center;font-size:11px">CJ6-300_me</div><svg class="a" style="left:340px;top:240px" width="80" height="26" viewBox="0 0 80 26"><path d="M9 0 H43 V14 L9 12 Z" fill="#DADAD8"/><path d="M43 0 H66 V9 L43 14 Z" fill="#B4AA9A"/><g stroke="#55595C" stroke-width="1"><path d="M12 2 H41 M12 5 H41 M12 8 H41 M12 11 H41"/></g><g stroke="#8A8E90" stroke-width=".8"><path d="M16 0 V12 M20 0 V12 M24 0 V12 M28 0 V12 M32 0 V12 M36 0 V12"/></g><path d="M9 12 L43 14 L66 9 V11 L43 16.5 L9 14.5 Z" fill="#8C8C8A"/><ellipse cx="15.5" cy="18" rx="2.6" ry="3" fill="#1C1C1C"/><ellipse cx="45.5" cy="21" rx="2.8" ry="3.2" fill="#1C1C1C"/><ellipse cx="60" cy="13.5" rx="2.2" ry="2.8" fill="#1C1C1C"/></svg><svg class="a" style="left:455px;top:240px" width="94" height="17" viewBox="0 0 94 18" preserveAspectRatio="none"><rect width="94" height="18" fill="#1E2830"/><path d="M0 0 H22 L26 10 L18 17 H0 Z" fill="#5E6C78"/><path d="M26 0 H32 L30 14 H27 Z" fill="#34506C"/><path d="M40 4 L60 2 L66 12 L44 14 Z" fill="#2B363F"/><path d="M66 6 L84 2 L90 10 L72 16 Z" fill="#56626C"/><path d="M88 0 H94 V18 H90 Z" fill="#2A343C"/><path d="M34 12 L44 9 L46 12 L36 15 Z" fill="#4A5560"/></svg><svg class="a" style="left:580px;top:240px" width="94" height="17" viewBox="0 0 94 18" preserveAspectRatio="none"><rect width="94" height="18" fill="#1E2830"/><path d="M0 0 H22 L26 10 L18 17 H0 Z" fill="#5E6C78"/><path d="M26 0 H32 L30 14 H27 Z" fill="#34506C"/><path d="M40 4 L60 2 L66 12 L44 14 Z" fill="#2B363F"/><path d="M66 6 L84 2 L90 10 L72 16 Z" fill="#56626C"/><path d="M88 0 H94 V18 H90 Z" fill="#2A343C"/><path d="M34 12 L44 9 L46 12 L36 15 Z" fill="#4A5560"/></svg><svg class="a" style="left:705px;top:240px" width="94" height="17" viewBox="0 0 94 18" preserveAspectRatio="none"><rect width="94" height="18" fill="#5C5C54"/><path d="M0 6 H20 V18 H0 Z" fill="#3E3E38"/><path d="M18 18 L24 2 L40 0 L44 18 Z" fill="#D4D6D8"/><path d="M52 18 L54 0 L72 2 L78 18 Z" fill="#CDD0D2"/><path d="M40 0 H56 L54 18 H44 Z" fill="#1C1C1C"/><path d="M30 4 L38 8 L36 14 L28 10 Z" fill="#8A8E94"/><path d="M60 4 L68 6 L66 13 L58 11 Z" fill="#8A8E94"/><path d="M78 4 H94 V18 H80 Z" fill="#6A6A60"/></svg><div class="a" style="left:454px;top:313px;width:96px;height:96px;border:1px solid #E9E7DF"></div><div class="a" style="left:579px;top:313px;width:96px;height:96px;border:1px solid #E9E7DF"></div><div class="a" style="left:704px;top:313px;width:96px;height:96px;border:1px solid #E9E7DF"></div><div class="a" style="left:326px;top:310px;width:102px;height:102px;border:3px solid #316AC5"></div><svg class="a" style="left:324px;top:308px" width="106" height="106" viewBox="0 0 988 988" preserveAspectRatio="none">
<defs><linearGradient id="ska" x1="0" y1="0" x2="0" y2="1"><stop offset="0" stop-color="#3A78C4"/><stop offset="0.6" stop-color="#5E94D2"/><stop offset="1" stop-color="#93B8E2"/></linearGradient>
<filter id="cba" x="-2%" y="-2%" width="104%" height="104%"><feGaussianBlur stdDeviation="5"/></filter>
<clipPath id="cca"><rect x="47" y="160" width="893" height="666"/></clipPath></defs>
<g clip-path="url(#cca)"><g filter="url(#cba)">
<rect x="0" y="100" width="988" height="430" fill="url(#ska)"/>
<rect x="0" y="520" width="988" height="400" fill="#858B94"/>
<rect x="700" y="505" width="300" height="50" fill="#7F8FA0"/>
<rect x="560" y="555" width="440" height="55" fill="#8F939A"/>
<path d="M560 640 L988 610 L988 700 L860 690 L560 700 Z" fill="#7C8088"/>
<path d="M0 660 L300 640 L500 700 L700 690 L988 730 L988 900 L0 900 Z" fill="#2C3036"/>
<path d="M560 700 L860 680 L870 695 L600 740 Z" fill="#3A3F45"/>
<path d="M620 720 L940 700 L940 760 L700 770 Z" fill="#777C84"/>
<path d="M0 455 L120 455 L260 490 L420 500 L560 510 L700 545 L705 580 L560 600 L280 600 L180 640 L0 640 Z" fill="#1E2A22"/>
<path d="M0 455 L150 458 L160 640 L0 640 Z" fill="#15201A"/>
<path d="M195 470 Q215 400 245 470 M270 475 Q300 405 330 478 M355 480 Q380 425 410 485" fill="none" stroke="#B8C4B0" stroke-width="12"/>
<circle cx="165" cy="490" r="12" fill="#C8C030"/><circle cx="165" cy="535" r="12" fill="#C8C030"/><circle cx="165" cy="580" r="12" fill="#C8C030"/>
<path d="M640 415 Q665 395 690 415 L705 545 L640 530 Z" fill="#7F9420"/>
<path d="M570 540 h60 v45 h-60 Z" fill="#C8D0D8"/>
<path d="M270 600 L560 590 L940 610 L940 630 L620 660 L420 660 L270 630 Z" fill="#2F7F68"/>
<path d="M560 620 L940 610 L940 632 L620 660 Z" fill="#4A3030"/>
<path d="M430 385 L500 385 L510 440 L495 470 L440 470 Z" fill="#E8ECF0"/>
<path d="M380 425 L435 395 L440 415 L390 440 Z" fill="#D8DCE0"/>
<circle cx="462" cy="365" r="16" fill="#9AA4B4"/>
<path d="M435 470 L495 470 L480 610 L430 610 Z" fill="#4A5A78"/>
<path d="M420 620 L470 620 L470 650 L420 650 Z" fill="#C04040"/>
<path d="M475 720 L530 715 L555 790 L480 800 Z" fill="#8A9098"/>
<path d="M460 650 L500 720" stroke="#222" stroke-width="10"/>
<path d="M170 640 L200 640 L215 700 L180 700 Z" fill="#15181C"/>
<ellipse cx="215" cy="720" rx="30" ry="40" fill="#15181C"/>
<path d="M300 815 L360 810 L365 830 L305 830 Z" fill="#E8E8D8"/>
</g></g></svg><svg class="a" style="left:450px;top:308px" width="106" height="106" viewBox="0 0 988 988">
<defs><filter id="kba" x="-2%" y="-2%" width="104%" height="104%"><feGaussianBlur stdDeviation="5"/></filter>
<clipPath id="kca"><rect x="48" y="160" width="874" height="668"/></clipPath></defs>
<g clip-path="url(#kca)"><g filter="url(#kba)">
<rect x="0" y="100" width="988" height="800" fill="#A6A8AE"/>
<rect x="0" y="100" width="988" height="130" fill="#B4B6BC"/>
<rect x="48" y="330" width="230" height="500" fill="#9FA1A6"/>
<path d="M232 180 L228 330" stroke="#8A8C92" stroke-width="6"/>
<path d="M60 300 L265 298 L265 322 L60 322 Z" fill="#1A1A1C"/>
<path d="M620 290 L760 300 L780 330 L640 312 Z" fill="#222"/>
<path d="M275 330 Q300 180 440 190 Q560 200 580 330 L560 420 L330 440 Z" fill="#86A494"/>
<path d="M330 200 Q440 170 540 230 L520 260 Q430 210 340 240 Z" fill="#A0BCB0"/>
<path d="M250 440 Q260 380 310 370 L300 560 Q255 520 250 440 Z" fill="#1C1C1C"/>
<path d="M285 400 L470 350 L440 520 L400 640 L420 830 L290 830 L280 600 Z" fill="#6F8F7C"/>
<path d="M300 420 L400 385 L385 540 L350 610 L298 600 Z" fill="#B8957A"/>
<path d="M300 430 L345 412 L340 520 L300 540 Z" fill="#C4B45A"/>
<path d="M292 600 L326 600 L336 830 L294 830 Z" fill="#B4A648"/>
<path d="M365 640 L402 640 L422 830 L372 830 Z" fill="#D4D6CE"/>
<path d="M400 560 Q420 480 520 470 L760 480 L860 600 L920 700 L922 830 L430 830 L400 640 Z" fill="#141618"/>
<path d="M470 420 L600 360 L700 380 L640 470 L490 480 Z" fill="#E0E0D8"/>
<path d="M640 400 L760 400 L800 480 L660 480 Z" fill="#303840"/>
<path d="M380 640 Q400 380 640 330 Q800 310 850 560" fill="none" stroke="#1A1C1E" stroke-width="26"/>
<path d="M860 600 L922 640 L922 720 L880 700 Z" fill="#D8D8D8"/>
<path d="M780 720 L880 720 L890 800 L790 800 Z" fill="#40444A"/>
<rect x="790" y="790" width="50" height="22" fill="#DDD"/>
<path d="M200 600 h50 M205 640 h40" stroke="#C8C8CC" stroke-width="10"/>
<path d="M200 740 h80" stroke="#444" stroke-width="8"/>
</g></g></svg><svg class="a" style="left:575px;top:308px" width="106" height="106" viewBox="0 0 988 988">
<defs><filter id="kbb" x="-2%" y="-2%" width="104%" height="104%"><feGaussianBlur stdDeviation="5"/></filter>
<clipPath id="kcb"><rect x="48" y="160" width="874" height="668"/></clipPath></defs>
<g clip-path="url(#kcb)"><g filter="url(#kbb)">
<rect x="0" y="100" width="988" height="800" fill="#A6A8AE"/>
<rect x="0" y="100" width="988" height="130" fill="#B4B6BC"/>
<rect x="48" y="330" width="230" height="500" fill="#9FA1A6"/>
<path d="M232 180 L228 330" stroke="#8A8C92" stroke-width="6"/>
<path d="M60 300 L265 298 L265 322 L60 322 Z" fill="#1A1A1C"/>
<path d="M620 290 L760 300 L780 330 L640 312 Z" fill="#222"/>
<path d="M275 330 Q300 180 440 190 Q560 200 580 330 L560 420 L330 440 Z" fill="#86A494"/>
<path d="M330 200 Q440 170 540 230 L520 260 Q430 210 340 240 Z" fill="#A0BCB0"/>
<path d="M250 440 Q260 380 310 370 L300 560 Q255 520 250 440 Z" fill="#1C1C1C"/>
<path d="M285 400 L470 350 L440 520 L400 640 L420 830 L290 830 L280 600 Z" fill="#6F8F7C"/>
<path d="M300 420 L400 385 L385 540 L350 610 L298 600 Z" fill="#B8957A"/>
<path d="M300 430 L345 412 L340 520 L300 540 Z" fill="#C4B45A"/>
<path d="M292 600 L326 600 L336 830 L294 830 Z" fill="#B4A648"/>
<path d="M365 640 L402 640 L422 830 L372 830 Z" fill="#D4D6CE"/>
<path d="M400 560 Q420 480 520 470 L760 480 L860 600 L920 700 L922 830 L430 830 L400 640 Z" fill="#141618"/>
<path d="M470 420 L600 360 L700 380 L640 470 L490 480 Z" fill="#E0E0D8"/>
<path d="M640 400 L760 400 L800 480 L660 480 Z" fill="#303840"/>
<path d="M380 640 Q400 380 640 330 Q800 310 850 560" fill="none" stroke="#1A1C1E" stroke-width="26"/>
<path d="M860 600 L922 640 L922 720 L880 700 Z" fill="#D8D8D8"/>
<path d="M780 720 L880 720 L890 800 L790 800 Z" fill="#40444A"/>
<rect x="790" y="790" width="50" height="22" fill="#DDD"/>
<path d="M200 600 h50 M205 640 h40" stroke="#C8C8CC" stroke-width="10"/>
<path d="M200 740 h80" stroke="#444" stroke-width="8"/>
</g></g></svg><svg class="a" style="left:700.1px;top:308px" width="104.2" height="106" viewBox="0 0 988 988" preserveAspectRatio="none">
<defs><linearGradient id="skb" x1="0" y1="0" x2="0" y2="1"><stop offset="0" stop-color="#3A78C4"/><stop offset="0.6" stop-color="#5E94D2"/><stop offset="1" stop-color="#93B8E2"/></linearGradient>
<filter id="cbb" x="-2%" y="-2%" width="104%" height="104%"><feGaussianBlur stdDeviation="5"/></filter>
<clipPath id="ccb"><rect x="47" y="160" width="893" height="666"/></clipPath></defs>
<g clip-path="url(#ccb)"><g filter="url(#cbb)">
<rect x="0" y="100" width="988" height="430" fill="url(#skb)"/>
<rect x="0" y="520" width="988" height="400" fill="#858B94"/>
<rect x="700" y="505" width="300" height="50" fill="#7F8FA0"/>
<rect x="560" y="555" width="440" height="55" fill="#8F939A"/>
<path d="M560 640 L988 610 L988 700 L860 690 L560 700 Z" fill="#7C8088"/>
<path d="M0 660 L300 640 L500 700 L700 690 L988 730 L988 900 L0 900 Z" fill="#2C3036"/>
<path d="M560 700 L860 680 L870 695 L600 740 Z" fill="#3A3F45"/>
<path d="M620 720 L940 700 L940 760 L700 770 Z" fill="#777C84"/>
<path d="M0 455 L120 455 L260 490 L420 500 L560 510 L700 545 L705 580 L560 600 L280 600 L180 640 L0 640 Z" fill="#1E2A22"/>
<path d="M0 455 L150 458 L160 640 L0 640 Z" fill="#15201A"/>
<path d="M195 470 Q215 400 245 470 M270 475 Q300 405 330 478 M355 480 Q380 425 410 485" fill="none" stroke="#B8C4B0" stroke-width="12"/>
<circle cx="165" cy="490" r="12" fill="#C8C030"/><circle cx="165" cy="535" r="12" fill="#C8C030"/><circle cx="165" cy="580" r="12" fill="#C8C030"/>
<path d="M640 415 Q665 395 690 415 L705 545 L640 530 Z" fill="#7F9420"/>
<path d="M570 540 h60 v45 h-60 Z" fill="#C8D0D8"/>
<path d="M270 600 L560 590 L940 610 L940 630 L620 660 L420 660 L270 630 Z" fill="#2F7F68"/>
<path d="M560 620 L940 610 L940 632 L620 660 Z" fill="#4A3030"/>
<path d="M430 385 L500 385 L510 440 L495 470 L440 470 Z" fill="#E8ECF0"/>
<path d="M380 425 L435 395 L440 415 L390 440 Z" fill="#D8DCE0"/>
<circle cx="462" cy="365" r="16" fill="#9AA4B4"/>
<path d="M435 470 L495 470 L480 610 L430 610 Z" fill="#4A5A78"/>
<path d="M420 620 L470 620 L470 650 L420 650 Z" fill="#C04040"/>
<path d="M475 720 L530 715 L555 790 L480 800 Z" fill="#8A9098"/>
<path d="M460 650 L500 720" stroke="#222" stroke-width="10"/>
<path d="M170 640 L200 640 L215 700 L180 700 Z" fill="#15181C"/>
<ellipse cx="215" cy="720" rx="30" ry="40" fill="#15181C"/>
<path d="M300 815 L360 810 L365 830 L305 830 Z" fill="#E8E8D8"/>
</g></g></svg><div class="a" style="left:342px;top:413px;width:70px;height:14px;background:#316AC5"></div><div class="t" style="left:329px;top:414px;width:97px;text-align:center;font-size:11px;color:#fff">CJ6-300_me2</div><div class="t" style="left:444px;top:414px;width:117px;text-align:center;font-size:11px">CJ6_Cockpit-300</div><div class="t" style="left:569px;top:414px;width:117px;text-align:center;font-size:11px">CJ6_Cockpit-800</div><div class="t" style="left:694px;top:414px;width:117px;text-align:center;font-size:11px">CJ6_Sac</div><div class="a" style="left:869px;top:240px;width:17px;height:189px;background:linear-gradient(90deg,#F3F1EC,#FDFDFB 50%,#FEFEFB)"></div><div class="sbtn" style="left:870px;top:241px"></div><svg class="a" style="left:873px;top:245px" width="9" height="7"><path d="M1 5.5 L4.5 2 L8 5.5" stroke="#3F5280" stroke-width="2.5" fill="none"/></svg><div class="sbtn" style="left:870px;top:412px"></div><svg class="a" style="left:873px;top:416px" width="9" height="7"><path d="M1 1.5 L4.5 5 L8 1.5" stroke="#3F5280" stroke-width="2.5" fill="none"/></svg><div class="sbtn" style="left:870px;top:308px;height:8px"></div><div class="t" style="left:313px;top:442px;font-size:11px">File name:</div><div class="inp" style="left:386px;top:439px;width:401px;height:20px">CJ6-300_me2</div><div class="t" style="left:313px;top:473px;font-size:11px">Files of type:</div><div class="inp" style="left:386px;top:469px;width:401px;height:21px">Supported files1</div><div class="a" style="left:769px;top:471px;width:17px;height:17px;border:1px solid #fff;border-radius:2px;background:linear-gradient(135deg,#CFDDFD,#B4C8F8);box-shadow:inset 0 0 0 1px #B4C8F6"></div><svg class="a" style="left:773px;top:476px" width="9" height="7"><path d="M1 1.5 L4.5 5 L8 1.5" stroke="#3F5280" stroke-width="2.5" fill="none"/></svg><div class="btn def" style="left:807px;top:439px;width:73px;height:21px;font-size:11px;">Open</div><div class="btn " style="left:807px;top:468px;width:73px;height:21px;font-size:11px;">Cancel</div><div class="a" style="left:305px;top:500px;width:272px;height:252px;background:#fff;border-top:1px solid #B5B2A3"></div><svg class="a" style="left:304px;top:520px" width="276" height="210" viewBox="0 0 1296 986">
<defs><linearGradient id="gsk" x1="0" y1="0" x2="0" y2="1"><stop offset="0" stop-color="#9C9C9C"/><stop offset="0.45" stop-color="#B2B2B2"/><stop offset="0.8" stop-color="#CACACA"/><stop offset="1" stop-color="#D8D8D8"/></linearGradient>
<linearGradient id="gwing" x1="0" y1="0" x2="0" y2="1"><stop offset="0" stop-color="#909090"/><stop offset="0.5" stop-color="#6E6E6E"/><stop offset="1" stop-color="#4A4A4A"/></linearGradient>
<pattern id="chk" width="28" height="28" patternUnits="userSpaceOnUse" patternTransform="rotate(8)"><rect width="28" height="28" fill="#2A2A2A"/><rect width="14" height="14" fill="#5E5E5E"/><rect x="14" y="14" width="14" height="14" fill="#5E5E5E"/></pattern>
<filter id="gb" x="-2%" y="-2%" width="104%" height="104%"><feGaussianBlur stdDeviation="2.2"/></filter>
<clipPath id="gcl"><rect x="20" y="22" width="1252" height="938"/></clipPath></defs>
<rect x="15" y="17" width="1262" height="948" fill="#000"/>
<g clip-path="url(#gcl)"><g filter="url(#gb)">
<rect x="0" y="0" width="1296" height="540" fill="url(#gsk)"/>
<rect x="0" y="520" width="1296" height="470" fill="#8C8C8C"/>
<rect x="930" y="520" width="370" height="36" fill="#4E4E4E"/>
<path d="M950 540 h40 M1090 538 h30 M1160 536 h24" stroke="#DDD" stroke-width="8"/>
<rect x="930" y="556" width="370" height="22" fill="#9C9C9C"/>
<rect x="930" y="564" width="200" height="8" fill="#444"/>
<rect x="930" y="578" width="370" height="70" fill="#ABABAB"/>
<path d="M700 700 L1296 680 L1296 870 L900 800 L700 800 Z" fill="#8E8E8E"/>
<path d="M780 722 L1170 748 L1165 768 L800 740 Z" fill="#2E2E2E"/>
<path d="M0 750 L330 715 L620 760 L640 800 L900 800 L1296 862 L1296 990 L0 990 Z" fill="#2B2B2B"/>
<path d="M690 800 L930 745 L960 760 L720 830 Z" fill="#3A3A3A"/>
<path d="M0 700 L180 700 L330 720 L20 760 Z" fill="#777"/>
<path d="M230 898 L560 858 L600 880 L300 930 Z" fill="#555"/>
<path d="M360 940 L470 930 L480 960 L370 962 Z" fill="#DDD"/>
<path d="M0 428 L150 440 L300 468 L530 495 L640 500 L850 522 L940 568 L940 610 L900 622 L640 642 L330 645 L160 690 L0 692 Z" fill="#2C2C2C"/>
<path d="M0 428 L150 440 L160 690 L0 692 Z" fill="#1F1F1F"/>
<path d="M0 690 L160 688 L330 645 L330 668 L180 705 L0 705 Z" fill="#3C3C3C"/>
<rect x="160" y="465" width="36" height="30" fill="#9A9A9A"/><rect x="165" y="530" width="36" height="30" fill="#9A9A9A"/><rect x="162" y="596" width="36" height="32" fill="#9A9A9A"/>
<path d="M18 490 L60 500 L18 512 Z" fill="#EEE"/>
<path d="M160 440 L230 392 L300 400 L300 468 Z" fill="#9C9C9C"/>
<path d="M335 470 L350 410 L420 392 L470 410 L520 480 Z" fill="#A4A4A4"/>
<path d="M226 450 Q240 375 275 385 Q295 400 298 466" fill="none" stroke="#333" stroke-width="7"/>
<path d="M336 470 Q350 395 385 400 Q410 410 416 472" fill="none" stroke="#333" stroke-width="7"/>
<path d="M440 475 Q455 415 490 420 Q510 430 520 482" fill="none" stroke="#333" stroke-width="7"/>
<path d="M530 490 Q545 430 570 432" fill="none" stroke="#444" stroke-width="6"/>
<rect x="305" y="482" width="115" height="30" fill="#3A3A3A"/><path d="M312 492 h100 M330 504 h80" stroke="#999" stroke-width="4"/>
<path d="M415 470 L436 545" stroke="#888" stroke-width="4"/>
<path d="M860 364 L906 370 L932 560 L845 522 Z" fill="url(#chk)"/>
<path d="M748 560 h28 v30 h-28 Z M808 562 h24 v28 h-24 Z" fill="#DADADA"/>
<path d="M790 540 l9 26 h27 l-22 16 l8 27 l-22 -17 l-22 17 l8 -27 l-22 -16 h27 Z" fill="#F2F2F2"/>
<path d="M330 640 L380 624 L560 640 L800 652 L1296 636 L1296 690 L700 722 L560 716 L330 672 Z" fill="url(#gwing)"/>
<path d="M540 660 Q560 640 600 650 L1296 640 L1296 662 L600 690 Q550 700 540 660 Z" fill="#8A8A8A"/>
<path d="M470 398 L545 365 L552 385 L480 412 Z" fill="#CFCFCF"/>
<path d="M545 352 L590 338 L650 352 L668 402 L640 452 L560 452 L550 400 Z" fill="#DCDCDC"/>
<path d="M640 400 L668 402 L650 470 L635 465 Z" fill="#BBB"/>
<circle cx="600" cy="308" r="21" fill="#8A8A8A"/><rect x="580" y="288" width="40" height="12" fill="#B5B5B5"/>
<path d="M548 455 L585 455 L582 625 L545 628 Z" fill="#7A7A7A"/>
<path d="M585 452 L640 455 L632 640 L592 640 Z" fill="#222"/>
<path d="M650 470 L700 468 L720 500 L650 500 Z" fill="#888"/>
<path d="M620 728 L668 728 L716 858 L716 900 L626 922 L618 850 Z" fill="#C4C4C4"/>
<path d="M578 722 Q590 760 615 775" fill="none" stroke="#222" stroke-width="6"/>
<path d="M186 700 L228 700 L236 760 L196 760 Z" fill="#2A2A2A"/>
<ellipse cx="258" cy="786" rx="32" ry="46" fill="#1C1C1C"/>
<path d="M18 700 L45 705 L22 740" fill="none" stroke="#222" stroke-width="5"/>
</g></g>
</svg><div class="a" style="left:581px;top:517px;width:13px;height:13px;border:1px solid #1C5180;background:linear-gradient(135deg,#DCDCD7,#FFFFFF 80%)"></div><svg class="a" style="left:581px;top:518px" width="13" height="13"><path d="M3 5.5 L5.5 8 L10 3.5" stroke="#21A121" stroke-width="2.2" fill="none"/></svg><div class="t" style="left:597px;top:517px;font-size:11px">Unite Lines</div><div class="btn " style="left:704px;top:514px;width:25px;height:18px;font-size:11px;">...</div><div class="a" style="left:581px;top:543px;width:13px;height:13px;border:1px solid #1C5180;background:linear-gradient(135deg,#DCDCD7,#FFFFFF 80%)"></div><svg class="a" style="left:581px;top:544px" width="13" height="13"><path d="M3 5.5 L5.5 8 L10 3.5" stroke="#21A121" stroke-width="2.2" fill="none"/></svg><div class="t" style="left:597px;top:543px;font-size:11px;letter-spacing:0">DST,PLT Auto Smoot</div><div class="btn " style="left:704px;top:540px;width:25px;height:18px;font-size:11px;">...</div><div class="a" style="left:581px;top:569px;width:13px;height:13px;border:1px solid #1C5180;background:linear-gradient(135deg,#DCDCD7,#FFFFFF 80%)"></div><svg class="a" style="left:581px;top:570px" width="13" height="13"><path d="M3 5.5 L5.5 8 L10 3.5" stroke="#21A121" stroke-width="2.2" fill="none"/></svg><div class="t" style="left:597px;top:569px;font-size:11px">Auto Order</div><div class="btn " style="left:704px;top:566px;width:25px;height:18px;font-size:11px;">...</div><div class="t" style="left:583px;top:605px;font-size:11px;letter-spacing:0">PLT Unit:</div><div class="inp" style="left:671px;top:599px;width:59px;height:21px">1016</div><div class="a" style="left:712px;top:601px;width:17px;height:17px;border:1px solid #fff;border-radius:2px;background:linear-gradient(135deg,#CFDDFD,#B4C8F8);box-shadow:inset 0 0 0 1px #B4C8F6"></div><svg class="a" style="left:716px;top:606px" width="9" height="7"><path d="M1 1.5 L4.5 5 L8 1.5" stroke="#3F5280" stroke-width="2.5" fill="none"/></svg><div class="a" style="left:580px;top:679px;width:13px;height:13px;border:1px solid #1C5180;background:linear-gradient(135deg,#DCDCD7,#FFFFFF 80%)"></div><div class="t" style="left:596px;top:679px;font-size:11px;letter-spacing:-.22px;width:127px;overflow:hidden">Reserve the current docment</div><div class="a" style="left:580px;top:730px;width:13px;height:13px;border:1px solid #1C5180;background:linear-gradient(135deg,#DCDCD7,#FFFFFF 80%)"></div><svg class="a" style="left:580px;top:731px" width="13" height="13"><path d="M3 5.5 L5.5 8 L10 3.5" stroke="#21A121" stroke-width="2.2" fill="none"/></svg><div class="t" style="left:596px;top:730px;font-size:11px">Preview</div><svg class="a" style="left:881px;top:740px" width="11" height="11"><g fill="#B8B4A2"><rect x="8" y="8" width="2" height="2"/><rect x="4" y="8" width="2" height="2"/><rect x="0" y="8" width="2" height="2"/><rect x="8" y="4" width="2" height="2"/><rect x="4" y="4" width="2" height="2"/><rect x="8" y="0" width="2" height="2"/></g></svg><svg class="a" style="left:0;top:0" width="1296" height="988"><g fill="none" stroke="#D01818" stroke-width="1">
<ellipse cx="29.3" cy="72.8" rx="15.2" ry="16.4"/>
<path d="M41 82 L173 286 M41 82 L52.5 123 M41 82 L68 112"/>
<path d="M683 639.5 L609 674.5 M609 674.5 L635 652.5 M609 674.5 L641.5 672"/>
</g></svg></body></html>
